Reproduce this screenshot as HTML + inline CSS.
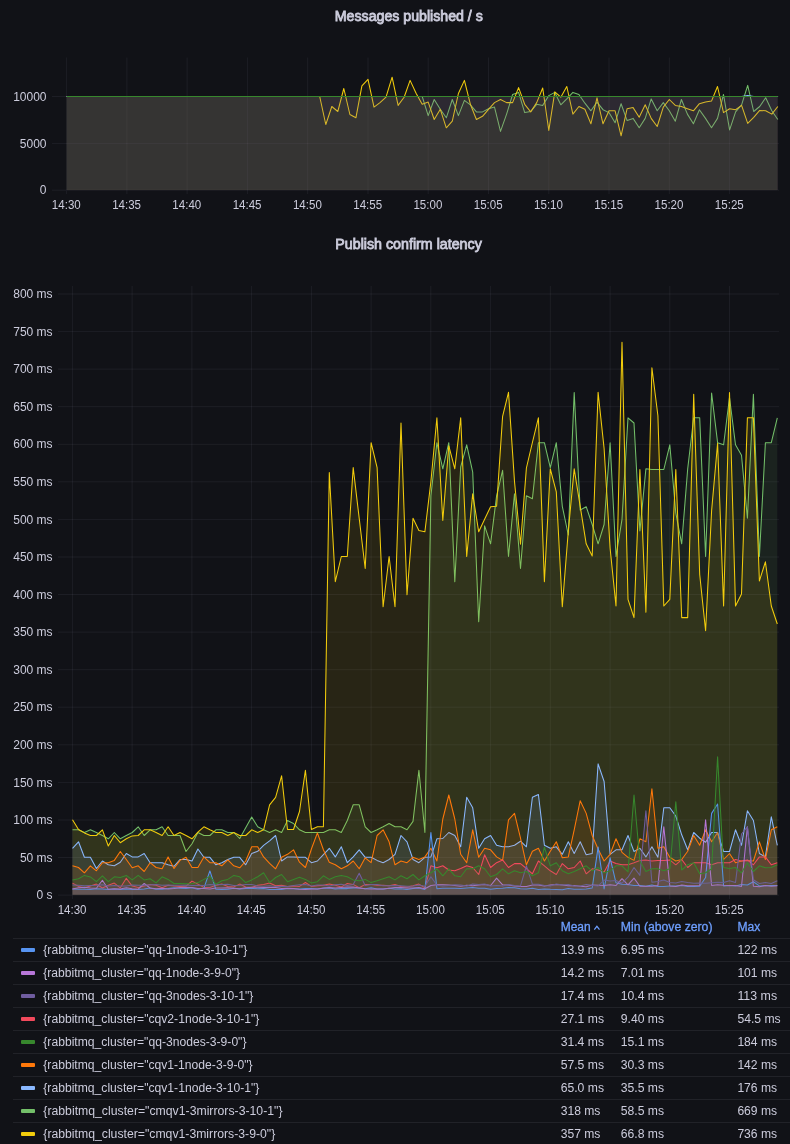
<!DOCTYPE html><html><head><meta charset="utf-8"><title>RabbitMQ latency</title><style>html,body{margin:0;padding:0;background:#111217}body{width:790px;height:1144px;overflow:hidden}svg{display:block;will-change:transform}text{font-family:"Liberation Sans",sans-serif;fill:rgb(204,204,220)}</style></head><body>
<svg width="790" height="1144" viewBox="0 0 790 1144">
<rect width="790" height="1144" fill="#111217"/>
<text x="334.8" y="21.2" font-size="14" stroke="rgb(204,204,220)" stroke-width="0.8" textLength="148" lengthAdjust="spacingAndGlyphs">Messages published / s</text>
<text x="335.3" y="248.7" font-size="14" stroke="rgb(204,204,220)" stroke-width="0.8" textLength="146.5" lengthAdjust="spacingAndGlyphs">Publish confirm latency</text>
<line x1="66.6" y1="57.5" x2="66.6" y2="194" stroke="rgba(204,204,220,0.07)" stroke-width="1"/>
<line x1="126.9" y1="57.5" x2="126.9" y2="194" stroke="rgba(204,204,220,0.07)" stroke-width="1"/>
<line x1="187.1" y1="57.5" x2="187.1" y2="194" stroke="rgba(204,204,220,0.07)" stroke-width="1"/>
<line x1="247.4" y1="57.5" x2="247.4" y2="194" stroke="rgba(204,204,220,0.07)" stroke-width="1"/>
<line x1="307.7" y1="57.5" x2="307.7" y2="194" stroke="rgba(204,204,220,0.07)" stroke-width="1"/>
<line x1="368.0" y1="57.5" x2="368.0" y2="194" stroke="rgba(204,204,220,0.07)" stroke-width="1"/>
<line x1="428.2" y1="57.5" x2="428.2" y2="194" stroke="rgba(204,204,220,0.07)" stroke-width="1"/>
<line x1="488.5" y1="57.5" x2="488.5" y2="194" stroke="rgba(204,204,220,0.07)" stroke-width="1"/>
<line x1="548.8" y1="57.5" x2="548.8" y2="194" stroke="rgba(204,204,220,0.07)" stroke-width="1"/>
<line x1="609.0" y1="57.5" x2="609.0" y2="194" stroke="rgba(204,204,220,0.07)" stroke-width="1"/>
<line x1="669.3" y1="57.5" x2="669.3" y2="194" stroke="rgba(204,204,220,0.07)" stroke-width="1"/>
<line x1="729.6" y1="57.5" x2="729.6" y2="194" stroke="rgba(204,204,220,0.07)" stroke-width="1"/>
<line x1="52" y1="190.2" x2="779" y2="190.2" stroke="rgba(204,204,220,0.07)" stroke-width="1"/>
<line x1="52" y1="143.4" x2="779" y2="143.4" stroke="rgba(204,204,220,0.07)" stroke-width="1"/>
<line x1="52" y1="96.5" x2="779" y2="96.5" stroke="rgba(204,204,220,0.07)" stroke-width="1"/>
<path d="M66.6 96.5 L72.6 96.5 L78.7 96.5 L84.7 96.5 L90.7 96.5 L96.7 96.5 L102.8 96.5 L108.8 96.5 L114.8 96.5 L120.8 96.5 L126.9 96.5 L132.9 96.5 L138.9 96.5 L145.0 96.5 L151.0 96.5 L157.0 96.5 L163.0 96.5 L169.1 96.5 L175.1 96.5 L181.1 96.5 L187.1 96.5 L193.2 96.5 L199.2 96.5 L205.2 96.5 L211.2 96.5 L217.3 96.5 L223.3 96.5 L229.3 96.5 L235.4 96.5 L241.4 96.5 L247.4 96.5 L253.4 96.5 L259.5 96.5 L265.5 96.5 L271.5 96.5 L277.5 96.5 L283.6 96.5 L289.6 96.5 L295.6 96.5 L301.7 96.5 L307.7 96.5 L313.7 96.5 L319.7 96.5 L325.8 96.5 L331.8 96.5 L337.8 96.5 L343.8 96.5 L349.9 96.5 L355.9 96.5 L361.9 96.5 L368.0 96.5 L374.0 96.5 L380.0 96.5 L386.0 96.5 L392.1 96.5 L398.1 96.5 L404.1 96.5 L410.1 96.5 L416.2 96.5 L422.2 96.5 L428.2 115.6 L434.2 99.5 L440.3 109.3 L446.3 117.8 L452.3 99.5 L458.4 115.6 L464.4 100.4 L470.4 104.8 L476.4 111.9 L482.5 111.9 L488.5 108.7 L494.5 107.1 L500.5 131.4 L506.6 114.1 L512.6 94.5 L518.6 92.4 L524.7 112.6 L530.7 111.5 L536.7 104.3 L542.7 105.4 L548.8 95.6 L554.8 92.4 L560.8 104.8 L566.8 98.9 L572.9 92.4 L578.9 94.5 L584.9 103.2 L590.9 110.8 L597.0 102.1 L603.0 109.7 L609.0 112.6 L615.1 122.8 L621.1 103.7 L627.1 120.6 L633.1 118.4 L639.2 127.8 L645.2 118.4 L651.2 98.9 L657.2 110.8 L663.3 102.6 L669.3 110.8 L675.3 121.2 L681.4 99.5 L687.4 114.1 L693.4 123.8 L699.4 109.7 L705.5 118.4 L711.5 127.8 L717.5 118.4 L723.5 94.5 L729.6 129.9 L735.6 111.9 L741.6 104.8 L747.7 85.4 L753.7 111.5 L759.7 106.5 L765.7 97.8 L771.8 110.8 L777.8 119.5 L777.8 190.2 L66.6 190.2 Z" fill="#73BF69" fill-opacity="0.038" stroke="none"/>
<path d="M66.6 96.5 L72.6 96.5 L78.7 96.5 L84.7 96.5 L90.7 96.5 L96.7 96.5 L102.8 96.5 L108.8 96.5 L114.8 96.5 L120.8 96.5 L126.9 96.5 L132.9 96.5 L138.9 96.5 L145.0 96.5 L151.0 96.5 L157.0 96.5 L163.0 96.5 L169.1 96.5 L175.1 96.5 L181.1 96.5 L187.1 96.5 L193.2 96.5 L199.2 96.5 L205.2 96.5 L211.2 96.5 L217.3 96.5 L223.3 96.5 L229.3 96.5 L235.4 96.5 L241.4 96.5 L247.4 96.5 L253.4 96.5 L259.5 96.5 L265.5 96.5 L271.5 96.5 L277.5 96.5 L283.6 96.5 L289.6 96.5 L295.6 96.5 L301.7 96.5 L307.7 96.5 L313.7 96.5 L319.7 96.5 L325.8 96.5 L331.8 96.5 L337.8 96.5 L343.8 96.5 L349.9 96.5 L355.9 96.5 L361.9 96.5 L368.0 96.5 L374.0 96.5 L380.0 96.5 L386.0 96.5 L392.1 96.5 L398.1 96.5 L404.1 96.5 L410.1 96.5 L416.2 96.5 L422.2 96.5 L428.2 115.6 L434.2 99.5 L440.3 109.3 L446.3 117.8 L452.3 99.5 L458.4 115.6 L464.4 100.4 L470.4 104.8 L476.4 111.9 L482.5 111.9 L488.5 108.7 L494.5 107.1 L500.5 131.4 L506.6 114.1 L512.6 94.5 L518.6 92.4 L524.7 112.6 L530.7 111.5 L536.7 104.3 L542.7 105.4 L548.8 95.6 L554.8 92.4 L560.8 104.8 L566.8 98.9 L572.9 92.4 L578.9 94.5 L584.9 103.2 L590.9 110.8 L597.0 102.1 L603.0 109.7 L609.0 112.6 L615.1 122.8 L621.1 103.7 L627.1 120.6 L633.1 118.4 L639.2 127.8 L645.2 118.4 L651.2 98.9 L657.2 110.8 L663.3 102.6 L669.3 110.8 L675.3 121.2 L681.4 99.5 L687.4 114.1 L693.4 123.8 L699.4 109.7 L705.5 118.4 L711.5 127.8 L717.5 118.4 L723.5 94.5 L729.6 129.9 L735.6 111.9 L741.6 104.8 L747.7 85.4 L753.7 111.5 L759.7 106.5 L765.7 97.8 L771.8 110.8 L777.8 119.5" fill="none" stroke="#73BF69" stroke-width="1.05" stroke-linejoin="round"/>
<path d="M66.6 96.5 L72.6 96.5 L78.7 96.5 L84.7 96.5 L90.7 96.5 L96.7 96.5 L102.8 96.5 L108.8 96.5 L114.8 96.5 L120.8 96.5 L126.9 96.5 L132.9 96.5 L138.9 96.5 L145.0 96.5 L151.0 96.5 L157.0 96.5 L163.0 96.5 L169.1 96.5 L175.1 96.5 L181.1 96.5 L187.1 96.5 L193.2 96.5 L199.2 96.5 L205.2 96.5 L211.2 96.5 L217.3 96.5 L223.3 96.5 L229.3 96.5 L235.4 96.5 L241.4 96.5 L247.4 96.5 L253.4 96.5 L259.5 96.5 L265.5 96.5 L271.5 96.5 L277.5 96.5 L283.6 96.5 L289.6 96.5 L295.6 96.5 L301.7 96.5 L307.7 96.5 L313.7 96.5 L319.7 96.5 L325.8 124.5 L331.8 106.5 L337.8 111.5 L343.8 88.5 L349.9 114.5 L355.9 117.8 L361.9 85.9 L368.0 79.4 L374.0 107.1 L380.0 102.6 L386.0 97.2 L392.1 77.2 L398.1 105.4 L404.1 97.2 L410.1 80.4 L416.2 93.5 L422.2 104.3 L428.2 102.1 L434.2 119.5 L440.3 109.3 L446.3 127.8 L452.3 121.2 L458.4 93.5 L464.4 80.4 L470.4 104.3 L476.4 119.5 L482.5 116.3 L488.5 109.3 L494.5 102.6 L500.5 99.5 L506.6 102.6 L512.6 102.6 L518.6 87.6 L524.7 104.3 L530.7 111.9 L536.7 102.6 L542.7 88.0 L548.8 130.4 L554.8 91.9 L560.8 97.2 L566.8 86.5 L572.9 114.1 L578.9 106.5 L584.9 109.3 L590.9 123.8 L597.0 97.8 L603.0 123.8 L609.0 110.8 L615.1 110.8 L621.1 135.8 L627.1 108.7 L633.1 107.6 L639.2 117.3 L645.2 104.8 L651.2 118.4 L657.2 126.5 L663.3 107.1 L669.3 99.5 L675.3 105.4 L681.4 106.5 L687.4 108.7 L693.4 110.8 L699.4 103.7 L705.5 102.1 L711.5 101.1 L717.5 86.5 L723.5 112.6 L729.6 108.7 L735.6 109.7 L741.6 105.4 L747.7 123.4 L753.7 117.3 L759.7 110.4 L765.7 110.8 L771.8 114.1 L777.8 106.5 L777.8 190.2 L66.6 190.2 Z" fill="#F2CC0C" fill-opacity="0.038" stroke="none"/>
<path d="M66.6 96.5 L72.6 96.5 L78.7 96.5 L84.7 96.5 L90.7 96.5 L96.7 96.5 L102.8 96.5 L108.8 96.5 L114.8 96.5 L120.8 96.5 L126.9 96.5 L132.9 96.5 L138.9 96.5 L145.0 96.5 L151.0 96.5 L157.0 96.5 L163.0 96.5 L169.1 96.5 L175.1 96.5 L181.1 96.5 L187.1 96.5 L193.2 96.5 L199.2 96.5 L205.2 96.5 L211.2 96.5 L217.3 96.5 L223.3 96.5 L229.3 96.5 L235.4 96.5 L241.4 96.5 L247.4 96.5 L253.4 96.5 L259.5 96.5 L265.5 96.5 L271.5 96.5 L277.5 96.5 L283.6 96.5 L289.6 96.5 L295.6 96.5 L301.7 96.5 L307.7 96.5 L313.7 96.5 L319.7 96.5 L325.8 124.5 L331.8 106.5 L337.8 111.5 L343.8 88.5 L349.9 114.5 L355.9 117.8 L361.9 85.9 L368.0 79.4 L374.0 107.1 L380.0 102.6 L386.0 97.2 L392.1 77.2 L398.1 105.4 L404.1 97.2 L410.1 80.4 L416.2 93.5 L422.2 104.3 L428.2 102.1 L434.2 119.5 L440.3 109.3 L446.3 127.8 L452.3 121.2 L458.4 93.5 L464.4 80.4 L470.4 104.3 L476.4 119.5 L482.5 116.3 L488.5 109.3 L494.5 102.6 L500.5 99.5 L506.6 102.6 L512.6 102.6 L518.6 87.6 L524.7 104.3 L530.7 111.9 L536.7 102.6 L542.7 88.0 L548.8 130.4 L554.8 91.9 L560.8 97.2 L566.8 86.5 L572.9 114.1 L578.9 106.5 L584.9 109.3 L590.9 123.8 L597.0 97.8 L603.0 123.8 L609.0 110.8 L615.1 110.8 L621.1 135.8 L627.1 108.7 L633.1 107.6 L639.2 117.3 L645.2 104.8 L651.2 118.4 L657.2 126.5 L663.3 107.1 L669.3 99.5 L675.3 105.4 L681.4 106.5 L687.4 108.7 L693.4 110.8 L699.4 103.7 L705.5 102.1 L711.5 101.1 L717.5 86.5 L723.5 112.6 L729.6 108.7 L735.6 109.7 L741.6 105.4 L747.7 123.4 L753.7 117.3 L759.7 110.4 L765.7 110.8 L771.8 114.1 L777.8 106.5" fill="none" stroke="#F2CC0C" stroke-width="1.05" stroke-linejoin="round"/>
<path d="M66.6 96.5 L72.6 96.5 L78.7 96.5 L84.7 96.5 L90.7 96.5 L96.7 96.5 L102.8 96.5 L108.8 96.5 L114.8 96.5 L120.8 96.5 L126.9 96.5 L132.9 96.5 L138.9 96.5 L145.0 96.5 L151.0 96.5 L157.0 96.5 L163.0 96.5 L169.1 96.5 L175.1 96.5 L181.1 96.5 L187.1 96.5 L193.2 96.5 L199.2 96.5 L205.2 96.5 L211.2 96.5 L217.3 96.5 L223.3 96.5 L229.3 96.5 L235.4 96.5 L241.4 96.5 L247.4 96.5 L253.4 96.5 L259.5 96.5 L265.5 96.5 L271.5 96.5 L277.5 96.5 L283.6 96.5 L289.6 96.5 L295.6 96.5 L301.7 96.5 L307.7 96.5 L313.7 96.5 L319.7 96.5 L325.8 96.5 L331.8 96.5 L337.8 96.5 L343.8 96.5 L349.9 96.5 L355.9 96.5 L361.9 96.5 L368.0 96.5 L374.0 96.5 L380.0 96.5 L386.0 96.5 L392.1 96.5 L398.1 96.5 L404.1 96.5 L410.1 96.5 L416.2 96.5 L422.2 96.5 L428.2 96.5 L434.2 96.5 L440.3 96.5 L446.3 96.5 L452.3 96.5 L458.4 96.5 L464.4 96.5 L470.4 96.5 L476.4 96.5 L482.5 96.5 L488.5 96.5 L494.5 96.5 L500.5 96.5 L506.6 96.5 L512.6 96.5 L518.6 96.5 L524.7 96.5 L530.7 96.5 L536.7 96.5 L542.7 96.5 L548.8 96.5 L554.8 96.5 L560.8 96.5 L566.8 96.5 L572.9 96.5 L578.9 96.5 L584.9 96.5 L590.9 96.5 L597.0 96.5 L603.0 96.5 L609.0 96.5 L615.1 96.5 L621.1 96.5 L627.1 96.5 L633.1 96.5 L639.2 96.5 L645.2 96.5 L651.2 96.5 L657.2 96.5 L663.3 96.5 L669.3 96.5 L675.3 96.5 L681.4 96.5 L687.4 96.5 L693.4 96.5 L699.4 96.5 L705.5 96.5 L711.5 96.5 L717.5 96.5 L723.5 96.5 L729.6 96.5 L735.6 96.5 L741.6 96.5 L747.7 95.5 L753.7 96.5 L759.7 96.5 L765.7 96.5 L771.8 96.5 L777.8 96.5 L777.8 190.2 L66.6 190.2 Z" fill="#8AB8FF" fill-opacity="0.038" stroke="none"/>
<path d="M66.6 96.5 L72.6 96.5 L78.7 96.5 L84.7 96.5 L90.7 96.5 L96.7 96.5 L102.8 96.5 L108.8 96.5 L114.8 96.5 L120.8 96.5 L126.9 96.5 L132.9 96.5 L138.9 96.5 L145.0 96.5 L151.0 96.5 L157.0 96.5 L163.0 96.5 L169.1 96.5 L175.1 96.5 L181.1 96.5 L187.1 96.5 L193.2 96.5 L199.2 96.5 L205.2 96.5 L211.2 96.5 L217.3 96.5 L223.3 96.5 L229.3 96.5 L235.4 96.5 L241.4 96.5 L247.4 96.5 L253.4 96.5 L259.5 96.5 L265.5 96.5 L271.5 96.5 L277.5 96.5 L283.6 96.5 L289.6 96.5 L295.6 96.5 L301.7 96.5 L307.7 96.5 L313.7 96.5 L319.7 96.5 L325.8 96.5 L331.8 96.5 L337.8 96.5 L343.8 96.5 L349.9 96.5 L355.9 96.5 L361.9 96.5 L368.0 96.5 L374.0 96.5 L380.0 96.5 L386.0 96.5 L392.1 96.5 L398.1 96.5 L404.1 96.5 L410.1 96.5 L416.2 96.5 L422.2 96.5 L428.2 96.5 L434.2 96.5 L440.3 96.5 L446.3 96.5 L452.3 96.5 L458.4 96.5 L464.4 96.5 L470.4 96.5 L476.4 96.5 L482.5 96.5 L488.5 96.5 L494.5 96.5 L500.5 96.5 L506.6 96.5 L512.6 96.5 L518.6 96.5 L524.7 96.5 L530.7 96.5 L536.7 96.5 L542.7 96.5 L548.8 96.5 L554.8 96.5 L560.8 96.5 L566.8 96.5 L572.9 96.5 L578.9 96.5 L584.9 96.5 L590.9 96.5 L597.0 96.5 L603.0 96.5 L609.0 96.5 L615.1 96.5 L621.1 96.5 L627.1 96.5 L633.1 96.5 L639.2 96.5 L645.2 96.5 L651.2 96.5 L657.2 96.5 L663.3 96.5 L669.3 96.5 L675.3 96.5 L681.4 96.5 L687.4 96.5 L693.4 96.5 L699.4 96.5 L705.5 96.5 L711.5 96.5 L717.5 96.5 L723.5 96.5 L729.6 96.5 L735.6 96.5 L741.6 96.5 L747.7 95.5 L753.7 96.5 L759.7 96.5 L765.7 96.5 L771.8 96.5 L777.8 96.5" fill="none" stroke="#8AB8FF" stroke-width="1.05" stroke-linejoin="round"/>
<path d="M66.6 96.5 L72.6 96.5 L78.7 96.5 L84.7 96.5 L90.7 96.5 L96.7 96.5 L102.8 96.5 L108.8 96.5 L114.8 96.5 L120.8 96.5 L126.9 96.5 L132.9 96.5 L138.9 96.5 L145.0 96.5 L151.0 96.5 L157.0 96.5 L163.0 96.5 L169.1 96.5 L175.1 96.5 L181.1 96.5 L187.1 96.5 L193.2 96.5 L199.2 96.5 L205.2 96.5 L211.2 96.5 L217.3 96.5 L223.3 96.5 L229.3 96.5 L235.4 96.5 L241.4 96.5 L247.4 96.5 L253.4 96.5 L259.5 96.5 L265.5 96.5 L271.5 96.5 L277.5 96.5 L283.6 96.5 L289.6 96.5 L295.6 96.5 L301.7 96.5 L307.7 96.5 L313.7 96.5 L319.7 96.5 L325.8 96.5 L331.8 96.5 L337.8 96.5 L343.8 96.5 L349.9 96.5 L355.9 96.5 L361.9 96.5 L368.0 96.5 L374.0 96.5 L380.0 96.5 L386.0 96.5 L392.1 96.5 L398.1 96.5 L404.1 96.5 L410.1 96.5 L416.2 96.5 L422.2 96.5 L428.2 96.5 L434.2 96.5 L440.3 96.5 L446.3 96.5 L452.3 96.5 L458.4 96.5 L464.4 96.5 L470.4 96.5 L476.4 96.5 L482.5 96.5 L488.5 96.5 L494.5 96.5 L500.5 96.5 L506.6 96.5 L512.6 96.5 L518.6 96.5 L524.7 96.5 L530.7 96.5 L536.7 96.5 L542.7 96.5 L548.8 96.5 L554.8 96.5 L560.8 96.5 L566.8 96.5 L572.9 96.5 L578.9 96.5 L584.9 96.5 L590.9 96.5 L597.0 96.5 L603.0 96.5 L609.0 96.5 L615.1 96.5 L621.1 96.5 L627.1 96.5 L633.1 96.5 L639.2 96.5 L645.2 96.5 L651.2 96.5 L657.2 96.5 L663.3 96.5 L669.3 96.5 L675.3 96.5 L681.4 96.5 L687.4 96.5 L693.4 96.5 L699.4 96.5 L705.5 96.5 L711.5 96.5 L717.5 96.5 L723.5 96.5 L729.6 96.5 L735.6 96.5 L741.6 96.5 L747.7 96.5 L753.7 96.5 L759.7 96.5 L765.7 96.5 L771.8 96.5 L777.8 96.5 L777.8 190.2 L66.6 190.2 Z" fill="#FF780A" fill-opacity="0.038" stroke="none"/>
<path d="M66.6 96.5 L72.6 96.5 L78.7 96.5 L84.7 96.5 L90.7 96.5 L96.7 96.5 L102.8 96.5 L108.8 96.5 L114.8 96.5 L120.8 96.5 L126.9 96.5 L132.9 96.5 L138.9 96.5 L145.0 96.5 L151.0 96.5 L157.0 96.5 L163.0 96.5 L169.1 96.5 L175.1 96.5 L181.1 96.5 L187.1 96.5 L193.2 96.5 L199.2 96.5 L205.2 96.5 L211.2 96.5 L217.3 96.5 L223.3 96.5 L229.3 96.5 L235.4 96.5 L241.4 96.5 L247.4 96.5 L253.4 96.5 L259.5 96.5 L265.5 96.5 L271.5 96.5 L277.5 96.5 L283.6 96.5 L289.6 96.5 L295.6 96.5 L301.7 96.5 L307.7 96.5 L313.7 96.5 L319.7 96.5 L325.8 96.5 L331.8 96.5 L337.8 96.5 L343.8 96.5 L349.9 96.5 L355.9 96.5 L361.9 96.5 L368.0 96.5 L374.0 96.5 L380.0 96.5 L386.0 96.5 L392.1 96.5 L398.1 96.5 L404.1 96.5 L410.1 96.5 L416.2 96.5 L422.2 96.5 L428.2 96.5 L434.2 96.5 L440.3 96.5 L446.3 96.5 L452.3 96.5 L458.4 96.5 L464.4 96.5 L470.4 96.5 L476.4 96.5 L482.5 96.5 L488.5 96.5 L494.5 96.5 L500.5 96.5 L506.6 96.5 L512.6 96.5 L518.6 96.5 L524.7 96.5 L530.7 96.5 L536.7 96.5 L542.7 96.5 L548.8 96.5 L554.8 96.5 L560.8 96.5 L566.8 96.5 L572.9 96.5 L578.9 96.5 L584.9 96.5 L590.9 96.5 L597.0 96.5 L603.0 96.5 L609.0 96.5 L615.1 96.5 L621.1 96.5 L627.1 96.5 L633.1 96.5 L639.2 96.5 L645.2 96.5 L651.2 96.5 L657.2 96.5 L663.3 96.5 L669.3 96.5 L675.3 96.5 L681.4 96.5 L687.4 96.5 L693.4 96.5 L699.4 96.5 L705.5 96.5 L711.5 96.5 L717.5 96.5 L723.5 96.5 L729.6 96.5 L735.6 96.5 L741.6 96.5 L747.7 96.5 L753.7 96.5 L759.7 96.5 L765.7 96.5 L771.8 96.5 L777.8 96.5" fill="none" stroke="#FF780A" stroke-width="1.05" stroke-linejoin="round"/>
<path d="M66.6 96.5 L72.6 96.5 L78.7 96.5 L84.7 96.5 L90.7 96.5 L96.7 96.5 L102.8 96.5 L108.8 96.5 L114.8 96.5 L120.8 96.5 L126.9 96.5 L132.9 96.5 L138.9 96.5 L145.0 96.5 L151.0 96.5 L157.0 96.5 L163.0 96.5 L169.1 96.5 L175.1 96.5 L181.1 96.5 L187.1 96.5 L193.2 96.5 L199.2 96.5 L205.2 96.5 L211.2 96.5 L217.3 96.5 L223.3 96.5 L229.3 96.5 L235.4 96.5 L241.4 96.5 L247.4 96.5 L253.4 96.5 L259.5 96.5 L265.5 96.5 L271.5 96.5 L277.5 96.5 L283.6 96.5 L289.6 96.5 L295.6 96.5 L301.7 96.5 L307.7 96.5 L313.7 96.5 L319.7 96.5 L325.8 96.5 L331.8 96.5 L337.8 96.5 L343.8 96.5 L349.9 96.5 L355.9 96.5 L361.9 96.5 L368.0 96.5 L374.0 96.5 L380.0 96.5 L386.0 96.5 L392.1 96.5 L398.1 96.5 L404.1 96.5 L410.1 96.5 L416.2 96.5 L422.2 96.5 L428.2 96.5 L434.2 96.5 L440.3 96.5 L446.3 96.5 L452.3 96.5 L458.4 96.5 L464.4 96.5 L470.4 96.5 L476.4 96.5 L482.5 96.5 L488.5 96.5 L494.5 96.5 L500.5 96.5 L506.6 96.5 L512.6 96.5 L518.6 96.5 L524.7 96.5 L530.7 96.5 L536.7 96.5 L542.7 96.5 L548.8 96.5 L554.8 96.5 L560.8 96.5 L566.8 96.5 L572.9 96.5 L578.9 96.5 L584.9 96.5 L590.9 96.5 L597.0 96.5 L603.0 96.5 L609.0 96.5 L615.1 96.5 L621.1 96.5 L627.1 96.5 L633.1 96.5 L639.2 96.5 L645.2 96.5 L651.2 96.5 L657.2 96.5 L663.3 96.5 L669.3 96.5 L675.3 96.5 L681.4 96.5 L687.4 96.5 L693.4 96.5 L699.4 96.5 L705.5 96.5 L711.5 96.5 L717.5 96.5 L723.5 96.5 L729.6 96.5 L735.6 96.5 L741.6 96.5 L747.7 96.5 L753.7 96.5 L759.7 96.5 L765.7 96.5 L771.8 96.5 L777.8 96.5 L777.8 190.2 L66.6 190.2 Z" fill="#F2495C" fill-opacity="0.038" stroke="none"/>
<path d="M66.6 96.5 L72.6 96.5 L78.7 96.5 L84.7 96.5 L90.7 96.5 L96.7 96.5 L102.8 96.5 L108.8 96.5 L114.8 96.5 L120.8 96.5 L126.9 96.5 L132.9 96.5 L138.9 96.5 L145.0 96.5 L151.0 96.5 L157.0 96.5 L163.0 96.5 L169.1 96.5 L175.1 96.5 L181.1 96.5 L187.1 96.5 L193.2 96.5 L199.2 96.5 L205.2 96.5 L211.2 96.5 L217.3 96.5 L223.3 96.5 L229.3 96.5 L235.4 96.5 L241.4 96.5 L247.4 96.5 L253.4 96.5 L259.5 96.5 L265.5 96.5 L271.5 96.5 L277.5 96.5 L283.6 96.5 L289.6 96.5 L295.6 96.5 L301.7 96.5 L307.7 96.5 L313.7 96.5 L319.7 96.5 L325.8 96.5 L331.8 96.5 L337.8 96.5 L343.8 96.5 L349.9 96.5 L355.9 96.5 L361.9 96.5 L368.0 96.5 L374.0 96.5 L380.0 96.5 L386.0 96.5 L392.1 96.5 L398.1 96.5 L404.1 96.5 L410.1 96.5 L416.2 96.5 L422.2 96.5 L428.2 96.5 L434.2 96.5 L440.3 96.5 L446.3 96.5 L452.3 96.5 L458.4 96.5 L464.4 96.5 L470.4 96.5 L476.4 96.5 L482.5 96.5 L488.5 96.5 L494.5 96.5 L500.5 96.5 L506.6 96.5 L512.6 96.5 L518.6 96.5 L524.7 96.5 L530.7 96.5 L536.7 96.5 L542.7 96.5 L548.8 96.5 L554.8 96.5 L560.8 96.5 L566.8 96.5 L572.9 96.5 L578.9 96.5 L584.9 96.5 L590.9 96.5 L597.0 96.5 L603.0 96.5 L609.0 96.5 L615.1 96.5 L621.1 96.5 L627.1 96.5 L633.1 96.5 L639.2 96.5 L645.2 96.5 L651.2 96.5 L657.2 96.5 L663.3 96.5 L669.3 96.5 L675.3 96.5 L681.4 96.5 L687.4 96.5 L693.4 96.5 L699.4 96.5 L705.5 96.5 L711.5 96.5 L717.5 96.5 L723.5 96.5 L729.6 96.5 L735.6 96.5 L741.6 96.5 L747.7 96.5 L753.7 96.5 L759.7 96.5 L765.7 96.5 L771.8 96.5 L777.8 96.5" fill="none" stroke="#F2495C" stroke-width="1.05" stroke-linejoin="round"/>
<path d="M66.6 96.5 L72.6 96.5 L78.7 96.5 L84.7 96.5 L90.7 96.5 L96.7 96.5 L102.8 96.5 L108.8 96.5 L114.8 96.5 L120.8 96.5 L126.9 96.5 L132.9 96.5 L138.9 96.5 L145.0 96.5 L151.0 96.5 L157.0 96.5 L163.0 96.5 L169.1 96.5 L175.1 96.5 L181.1 96.5 L187.1 96.5 L193.2 96.5 L199.2 96.5 L205.2 96.5 L211.2 96.5 L217.3 96.5 L223.3 96.5 L229.3 96.5 L235.4 96.5 L241.4 96.5 L247.4 96.5 L253.4 96.5 L259.5 96.5 L265.5 96.5 L271.5 96.5 L277.5 96.5 L283.6 96.5 L289.6 96.5 L295.6 96.5 L301.7 96.5 L307.7 96.5 L313.7 96.5 L319.7 96.5 L325.8 96.5 L331.8 96.5 L337.8 96.5 L343.8 96.5 L349.9 96.5 L355.9 96.5 L361.9 96.5 L368.0 96.5 L374.0 96.5 L380.0 96.5 L386.0 96.5 L392.1 96.5 L398.1 96.5 L404.1 96.5 L410.1 96.5 L416.2 96.5 L422.2 96.5 L428.2 96.5 L434.2 96.5 L440.3 96.5 L446.3 96.5 L452.3 96.5 L458.4 96.5 L464.4 96.5 L470.4 96.5 L476.4 96.5 L482.5 96.5 L488.5 96.5 L494.5 96.5 L500.5 96.5 L506.6 96.5 L512.6 96.5 L518.6 96.5 L524.7 96.5 L530.7 96.5 L536.7 96.5 L542.7 96.5 L548.8 96.5 L554.8 96.5 L560.8 96.5 L566.8 96.5 L572.9 96.5 L578.9 96.5 L584.9 96.5 L590.9 96.5 L597.0 96.5 L603.0 96.5 L609.0 96.5 L615.1 96.5 L621.1 96.5 L627.1 96.5 L633.1 96.5 L639.2 96.5 L645.2 96.5 L651.2 96.5 L657.2 96.5 L663.3 96.5 L669.3 96.5 L675.3 96.5 L681.4 96.5 L687.4 96.5 L693.4 96.5 L699.4 96.5 L705.5 96.5 L711.5 96.5 L717.5 96.5 L723.5 96.5 L729.6 96.5 L735.6 96.5 L741.6 96.5 L747.7 96.5 L753.7 96.5 L759.7 96.5 L765.7 96.5 L771.8 96.5 L777.8 96.5 L777.8 190.2 L66.6 190.2 Z" fill="#5794F2" fill-opacity="0.038" stroke="none"/>
<path d="M66.6 96.5 L72.6 96.5 L78.7 96.5 L84.7 96.5 L90.7 96.5 L96.7 96.5 L102.8 96.5 L108.8 96.5 L114.8 96.5 L120.8 96.5 L126.9 96.5 L132.9 96.5 L138.9 96.5 L145.0 96.5 L151.0 96.5 L157.0 96.5 L163.0 96.5 L169.1 96.5 L175.1 96.5 L181.1 96.5 L187.1 96.5 L193.2 96.5 L199.2 96.5 L205.2 96.5 L211.2 96.5 L217.3 96.5 L223.3 96.5 L229.3 96.5 L235.4 96.5 L241.4 96.5 L247.4 96.5 L253.4 96.5 L259.5 96.5 L265.5 96.5 L271.5 96.5 L277.5 96.5 L283.6 96.5 L289.6 96.5 L295.6 96.5 L301.7 96.5 L307.7 96.5 L313.7 96.5 L319.7 96.5 L325.8 96.5 L331.8 96.5 L337.8 96.5 L343.8 96.5 L349.9 96.5 L355.9 96.5 L361.9 96.5 L368.0 96.5 L374.0 96.5 L380.0 96.5 L386.0 96.5 L392.1 96.5 L398.1 96.5 L404.1 96.5 L410.1 96.5 L416.2 96.5 L422.2 96.5 L428.2 96.5 L434.2 96.5 L440.3 96.5 L446.3 96.5 L452.3 96.5 L458.4 96.5 L464.4 96.5 L470.4 96.5 L476.4 96.5 L482.5 96.5 L488.5 96.5 L494.5 96.5 L500.5 96.5 L506.6 96.5 L512.6 96.5 L518.6 96.5 L524.7 96.5 L530.7 96.5 L536.7 96.5 L542.7 96.5 L548.8 96.5 L554.8 96.5 L560.8 96.5 L566.8 96.5 L572.9 96.5 L578.9 96.5 L584.9 96.5 L590.9 96.5 L597.0 96.5 L603.0 96.5 L609.0 96.5 L615.1 96.5 L621.1 96.5 L627.1 96.5 L633.1 96.5 L639.2 96.5 L645.2 96.5 L651.2 96.5 L657.2 96.5 L663.3 96.5 L669.3 96.5 L675.3 96.5 L681.4 96.5 L687.4 96.5 L693.4 96.5 L699.4 96.5 L705.5 96.5 L711.5 96.5 L717.5 96.5 L723.5 96.5 L729.6 96.5 L735.6 96.5 L741.6 96.5 L747.7 96.5 L753.7 96.5 L759.7 96.5 L765.7 96.5 L771.8 96.5 L777.8 96.5" fill="none" stroke="#5794F2" stroke-width="1.05" stroke-linejoin="round"/>
<path d="M66.6 96.5 L72.6 96.5 L78.7 96.5 L84.7 96.5 L90.7 96.5 L96.7 96.5 L102.8 96.5 L108.8 96.5 L114.8 96.5 L120.8 96.5 L126.9 96.5 L132.9 96.5 L138.9 96.5 L145.0 96.5 L151.0 96.5 L157.0 96.5 L163.0 96.5 L169.1 96.5 L175.1 96.5 L181.1 96.5 L187.1 96.5 L193.2 96.5 L199.2 96.5 L205.2 96.5 L211.2 96.5 L217.3 96.5 L223.3 96.5 L229.3 96.5 L235.4 96.5 L241.4 96.5 L247.4 96.5 L253.4 96.5 L259.5 96.5 L265.5 96.5 L271.5 96.5 L277.5 96.5 L283.6 96.5 L289.6 96.5 L295.6 96.5 L301.7 96.5 L307.7 96.5 L313.7 96.5 L319.7 96.5 L325.8 96.5 L331.8 96.5 L337.8 96.5 L343.8 96.5 L349.9 96.5 L355.9 96.5 L361.9 96.5 L368.0 96.5 L374.0 96.5 L380.0 96.5 L386.0 96.5 L392.1 96.5 L398.1 96.5 L404.1 96.5 L410.1 96.5 L416.2 96.5 L422.2 96.5 L428.2 96.5 L434.2 96.5 L440.3 96.5 L446.3 96.5 L452.3 96.5 L458.4 96.5 L464.4 96.5 L470.4 96.5 L476.4 96.5 L482.5 96.5 L488.5 96.5 L494.5 96.5 L500.5 96.5 L506.6 96.5 L512.6 96.5 L518.6 96.5 L524.7 96.5 L530.7 96.5 L536.7 96.5 L542.7 96.5 L548.8 96.5 L554.8 96.5 L560.8 96.5 L566.8 96.5 L572.9 96.5 L578.9 96.5 L584.9 96.5 L590.9 96.5 L597.0 96.5 L603.0 96.5 L609.0 96.5 L615.1 96.5 L621.1 96.5 L627.1 96.5 L633.1 96.5 L639.2 96.5 L645.2 96.5 L651.2 96.5 L657.2 96.5 L663.3 96.5 L669.3 96.5 L675.3 96.5 L681.4 96.5 L687.4 96.5 L693.4 96.5 L699.4 96.5 L705.5 96.5 L711.5 96.5 L717.5 96.5 L723.5 96.5 L729.6 96.5 L735.6 96.5 L741.6 96.5 L747.7 96.5 L753.7 96.5 L759.7 96.5 L765.7 96.5 L771.8 96.5 L777.8 96.5 L777.8 190.2 L66.6 190.2 Z" fill="#B877D9" fill-opacity="0.038" stroke="none"/>
<path d="M66.6 96.5 L72.6 96.5 L78.7 96.5 L84.7 96.5 L90.7 96.5 L96.7 96.5 L102.8 96.5 L108.8 96.5 L114.8 96.5 L120.8 96.5 L126.9 96.5 L132.9 96.5 L138.9 96.5 L145.0 96.5 L151.0 96.5 L157.0 96.5 L163.0 96.5 L169.1 96.5 L175.1 96.5 L181.1 96.5 L187.1 96.5 L193.2 96.5 L199.2 96.5 L205.2 96.5 L211.2 96.5 L217.3 96.5 L223.3 96.5 L229.3 96.5 L235.4 96.5 L241.4 96.5 L247.4 96.5 L253.4 96.5 L259.5 96.5 L265.5 96.5 L271.5 96.5 L277.5 96.5 L283.6 96.5 L289.6 96.5 L295.6 96.5 L301.7 96.5 L307.7 96.5 L313.7 96.5 L319.7 96.5 L325.8 96.5 L331.8 96.5 L337.8 96.5 L343.8 96.5 L349.9 96.5 L355.9 96.5 L361.9 96.5 L368.0 96.5 L374.0 96.5 L380.0 96.5 L386.0 96.5 L392.1 96.5 L398.1 96.5 L404.1 96.5 L410.1 96.5 L416.2 96.5 L422.2 96.5 L428.2 96.5 L434.2 96.5 L440.3 96.5 L446.3 96.5 L452.3 96.5 L458.4 96.5 L464.4 96.5 L470.4 96.5 L476.4 96.5 L482.5 96.5 L488.5 96.5 L494.5 96.5 L500.5 96.5 L506.6 96.5 L512.6 96.5 L518.6 96.5 L524.7 96.5 L530.7 96.5 L536.7 96.5 L542.7 96.5 L548.8 96.5 L554.8 96.5 L560.8 96.5 L566.8 96.5 L572.9 96.5 L578.9 96.5 L584.9 96.5 L590.9 96.5 L597.0 96.5 L603.0 96.5 L609.0 96.5 L615.1 96.5 L621.1 96.5 L627.1 96.5 L633.1 96.5 L639.2 96.5 L645.2 96.5 L651.2 96.5 L657.2 96.5 L663.3 96.5 L669.3 96.5 L675.3 96.5 L681.4 96.5 L687.4 96.5 L693.4 96.5 L699.4 96.5 L705.5 96.5 L711.5 96.5 L717.5 96.5 L723.5 96.5 L729.6 96.5 L735.6 96.5 L741.6 96.5 L747.7 96.5 L753.7 96.5 L759.7 96.5 L765.7 96.5 L771.8 96.5 L777.8 96.5" fill="none" stroke="#B877D9" stroke-width="1.05" stroke-linejoin="round"/>
<path d="M66.6 96.5 L72.6 96.5 L78.7 96.5 L84.7 96.5 L90.7 96.5 L96.7 96.5 L102.8 96.5 L108.8 96.5 L114.8 96.5 L120.8 96.5 L126.9 96.5 L132.9 96.5 L138.9 96.5 L145.0 96.5 L151.0 96.5 L157.0 96.5 L163.0 96.5 L169.1 96.5 L175.1 96.5 L181.1 96.5 L187.1 96.5 L193.2 96.5 L199.2 96.5 L205.2 96.5 L211.2 96.5 L217.3 96.5 L223.3 96.5 L229.3 96.5 L235.4 96.5 L241.4 96.5 L247.4 96.5 L253.4 96.5 L259.5 96.5 L265.5 96.5 L271.5 96.5 L277.5 96.5 L283.6 96.5 L289.6 96.5 L295.6 96.5 L301.7 96.5 L307.7 96.5 L313.7 96.5 L319.7 96.5 L325.8 96.5 L331.8 96.5 L337.8 96.5 L343.8 96.5 L349.9 96.5 L355.9 96.5 L361.9 96.5 L368.0 96.5 L374.0 96.5 L380.0 96.5 L386.0 96.5 L392.1 96.5 L398.1 96.5 L404.1 96.5 L410.1 96.5 L416.2 96.5 L422.2 96.5 L428.2 96.5 L434.2 96.5 L440.3 96.5 L446.3 96.5 L452.3 96.5 L458.4 96.5 L464.4 96.5 L470.4 96.5 L476.4 96.5 L482.5 96.5 L488.5 96.5 L494.5 96.5 L500.5 96.5 L506.6 96.5 L512.6 96.5 L518.6 96.5 L524.7 96.5 L530.7 96.5 L536.7 96.5 L542.7 96.5 L548.8 96.5 L554.8 96.5 L560.8 96.5 L566.8 96.5 L572.9 96.5 L578.9 96.5 L584.9 96.5 L590.9 96.5 L597.0 96.5 L603.0 96.5 L609.0 96.5 L615.1 96.5 L621.1 96.5 L627.1 96.5 L633.1 96.5 L639.2 96.5 L645.2 96.5 L651.2 96.5 L657.2 96.5 L663.3 96.5 L669.3 96.5 L675.3 96.5 L681.4 96.5 L687.4 96.5 L693.4 96.5 L699.4 96.5 L705.5 96.5 L711.5 96.5 L717.5 96.5 L723.5 96.5 L729.6 96.5 L735.6 96.5 L741.6 96.5 L747.7 96.5 L753.7 96.5 L759.7 96.5 L765.7 96.5 L771.8 96.5 L777.8 96.5 L777.8 190.2 L66.6 190.2 Z" fill="#705DA0" fill-opacity="0.038" stroke="none"/>
<path d="M66.6 96.5 L72.6 96.5 L78.7 96.5 L84.7 96.5 L90.7 96.5 L96.7 96.5 L102.8 96.5 L108.8 96.5 L114.8 96.5 L120.8 96.5 L126.9 96.5 L132.9 96.5 L138.9 96.5 L145.0 96.5 L151.0 96.5 L157.0 96.5 L163.0 96.5 L169.1 96.5 L175.1 96.5 L181.1 96.5 L187.1 96.5 L193.2 96.5 L199.2 96.5 L205.2 96.5 L211.2 96.5 L217.3 96.5 L223.3 96.5 L229.3 96.5 L235.4 96.5 L241.4 96.5 L247.4 96.5 L253.4 96.5 L259.5 96.5 L265.5 96.5 L271.5 96.5 L277.5 96.5 L283.6 96.5 L289.6 96.5 L295.6 96.5 L301.7 96.5 L307.7 96.5 L313.7 96.5 L319.7 96.5 L325.8 96.5 L331.8 96.5 L337.8 96.5 L343.8 96.5 L349.9 96.5 L355.9 96.5 L361.9 96.5 L368.0 96.5 L374.0 96.5 L380.0 96.5 L386.0 96.5 L392.1 96.5 L398.1 96.5 L404.1 96.5 L410.1 96.5 L416.2 96.5 L422.2 96.5 L428.2 96.5 L434.2 96.5 L440.3 96.5 L446.3 96.5 L452.3 96.5 L458.4 96.5 L464.4 96.5 L470.4 96.5 L476.4 96.5 L482.5 96.5 L488.5 96.5 L494.5 96.5 L500.5 96.5 L506.6 96.5 L512.6 96.5 L518.6 96.5 L524.7 96.5 L530.7 96.5 L536.7 96.5 L542.7 96.5 L548.8 96.5 L554.8 96.5 L560.8 96.5 L566.8 96.5 L572.9 96.5 L578.9 96.5 L584.9 96.5 L590.9 96.5 L597.0 96.5 L603.0 96.5 L609.0 96.5 L615.1 96.5 L621.1 96.5 L627.1 96.5 L633.1 96.5 L639.2 96.5 L645.2 96.5 L651.2 96.5 L657.2 96.5 L663.3 96.5 L669.3 96.5 L675.3 96.5 L681.4 96.5 L687.4 96.5 L693.4 96.5 L699.4 96.5 L705.5 96.5 L711.5 96.5 L717.5 96.5 L723.5 96.5 L729.6 96.5 L735.6 96.5 L741.6 96.5 L747.7 96.5 L753.7 96.5 L759.7 96.5 L765.7 96.5 L771.8 96.5 L777.8 96.5" fill="none" stroke="#705DA0" stroke-width="1.05" stroke-linejoin="round"/>
<path d="M66.6 96.5 L72.6 96.5 L78.7 96.5 L84.7 96.5 L90.7 96.5 L96.7 96.5 L102.8 96.5 L108.8 96.5 L114.8 96.5 L120.8 96.5 L126.9 96.5 L132.9 96.5 L138.9 96.5 L145.0 96.5 L151.0 96.5 L157.0 96.5 L163.0 96.5 L169.1 96.5 L175.1 96.5 L181.1 96.5 L187.1 96.5 L193.2 96.5 L199.2 96.5 L205.2 96.5 L211.2 96.5 L217.3 96.5 L223.3 96.5 L229.3 96.5 L235.4 96.5 L241.4 96.5 L247.4 96.5 L253.4 96.5 L259.5 96.5 L265.5 96.5 L271.5 96.5 L277.5 96.5 L283.6 96.5 L289.6 96.5 L295.6 96.5 L301.7 96.5 L307.7 96.5 L313.7 96.5 L319.7 96.5 L325.8 96.5 L331.8 96.5 L337.8 96.5 L343.8 96.5 L349.9 96.5 L355.9 96.5 L361.9 96.5 L368.0 96.5 L374.0 96.5 L380.0 96.5 L386.0 96.5 L392.1 96.5 L398.1 96.5 L404.1 96.5 L410.1 96.5 L416.2 96.5 L422.2 96.5 L428.2 96.5 L434.2 96.5 L440.3 96.5 L446.3 96.5 L452.3 96.5 L458.4 96.5 L464.4 96.5 L470.4 96.5 L476.4 96.5 L482.5 96.5 L488.5 96.5 L494.5 96.5 L500.5 96.5 L506.6 96.5 L512.6 96.5 L518.6 96.5 L524.7 96.5 L530.7 96.5 L536.7 96.5 L542.7 96.5 L548.8 96.5 L554.8 96.5 L560.8 96.5 L566.8 96.5 L572.9 96.5 L578.9 96.5 L584.9 96.5 L590.9 96.5 L597.0 96.5 L603.0 96.5 L609.0 96.5 L615.1 96.5 L621.1 96.5 L627.1 96.5 L633.1 96.5 L639.2 96.5 L645.2 96.5 L651.2 96.5 L657.2 96.5 L663.3 96.5 L669.3 96.5 L675.3 96.5 L681.4 96.5 L687.4 96.5 L693.4 96.5 L699.4 96.5 L705.5 96.5 L711.5 96.5 L717.5 96.5 L723.5 96.5 L729.6 96.5 L735.6 96.5 L741.6 96.5 L747.7 96.5 L753.7 96.5 L759.7 96.5 L765.7 96.5 L771.8 96.5 L777.8 96.5 L777.8 190.2 L66.6 190.2 Z" fill="#37872D" fill-opacity="0.038" stroke="none"/>
<path d="M66.6 96.5 L72.6 96.5 L78.7 96.5 L84.7 96.5 L90.7 96.5 L96.7 96.5 L102.8 96.5 L108.8 96.5 L114.8 96.5 L120.8 96.5 L126.9 96.5 L132.9 96.5 L138.9 96.5 L145.0 96.5 L151.0 96.5 L157.0 96.5 L163.0 96.5 L169.1 96.5 L175.1 96.5 L181.1 96.5 L187.1 96.5 L193.2 96.5 L199.2 96.5 L205.2 96.5 L211.2 96.5 L217.3 96.5 L223.3 96.5 L229.3 96.5 L235.4 96.5 L241.4 96.5 L247.4 96.5 L253.4 96.5 L259.5 96.5 L265.5 96.5 L271.5 96.5 L277.5 96.5 L283.6 96.5 L289.6 96.5 L295.6 96.5 L301.7 96.5 L307.7 96.5 L313.7 96.5 L319.7 96.5 L325.8 96.5 L331.8 96.5 L337.8 96.5 L343.8 96.5 L349.9 96.5 L355.9 96.5 L361.9 96.5 L368.0 96.5 L374.0 96.5 L380.0 96.5 L386.0 96.5 L392.1 96.5 L398.1 96.5 L404.1 96.5 L410.1 96.5 L416.2 96.5 L422.2 96.5 L428.2 96.5 L434.2 96.5 L440.3 96.5 L446.3 96.5 L452.3 96.5 L458.4 96.5 L464.4 96.5 L470.4 96.5 L476.4 96.5 L482.5 96.5 L488.5 96.5 L494.5 96.5 L500.5 96.5 L506.6 96.5 L512.6 96.5 L518.6 96.5 L524.7 96.5 L530.7 96.5 L536.7 96.5 L542.7 96.5 L548.8 96.5 L554.8 96.5 L560.8 96.5 L566.8 96.5 L572.9 96.5 L578.9 96.5 L584.9 96.5 L590.9 96.5 L597.0 96.5 L603.0 96.5 L609.0 96.5 L615.1 96.5 L621.1 96.5 L627.1 96.5 L633.1 96.5 L639.2 96.5 L645.2 96.5 L651.2 96.5 L657.2 96.5 L663.3 96.5 L669.3 96.5 L675.3 96.5 L681.4 96.5 L687.4 96.5 L693.4 96.5 L699.4 96.5 L705.5 96.5 L711.5 96.5 L717.5 96.5 L723.5 96.5 L729.6 96.5 L735.6 96.5 L741.6 96.5 L747.7 96.5 L753.7 96.5 L759.7 96.5 L765.7 96.5 L771.8 96.5 L777.8 96.5" fill="none" stroke="#37872D" stroke-width="1.05" stroke-linejoin="round"/>
<text x="66.3" y="209" font-size="12" text-anchor="middle" textLength="28.9" lengthAdjust="spacingAndGlyphs">14:30</text>
<text x="126.6" y="209" font-size="12" text-anchor="middle" textLength="28.9" lengthAdjust="spacingAndGlyphs">14:35</text>
<text x="186.8" y="209" font-size="12" text-anchor="middle" textLength="28.9" lengthAdjust="spacingAndGlyphs">14:40</text>
<text x="247.1" y="209" font-size="12" text-anchor="middle" textLength="28.9" lengthAdjust="spacingAndGlyphs">14:45</text>
<text x="307.4" y="209" font-size="12" text-anchor="middle" textLength="28.9" lengthAdjust="spacingAndGlyphs">14:50</text>
<text x="367.7" y="209" font-size="12" text-anchor="middle" textLength="28.9" lengthAdjust="spacingAndGlyphs">14:55</text>
<text x="427.9" y="209" font-size="12" text-anchor="middle" textLength="28.9" lengthAdjust="spacingAndGlyphs">15:00</text>
<text x="488.2" y="209" font-size="12" text-anchor="middle" textLength="28.9" lengthAdjust="spacingAndGlyphs">15:05</text>
<text x="548.5" y="209" font-size="12" text-anchor="middle" textLength="28.9" lengthAdjust="spacingAndGlyphs">15:10</text>
<text x="608.7" y="209" font-size="12" text-anchor="middle" textLength="28.9" lengthAdjust="spacingAndGlyphs">15:15</text>
<text x="669.0" y="209" font-size="12" text-anchor="middle" textLength="28.9" lengthAdjust="spacingAndGlyphs">15:20</text>
<text x="729.3" y="209" font-size="12" text-anchor="middle" textLength="28.9" lengthAdjust="spacingAndGlyphs">15:25</text>
<text x="46.5" y="194.4" font-size="12" text-anchor="end">0</text>
<text x="46.5" y="147.6" font-size="12" text-anchor="end">5000</text>
<text x="46.5" y="100.7" font-size="12" text-anchor="end">10000</text>
<line x1="72.4" y1="286" x2="72.4" y2="899" stroke="rgba(204,204,220,0.07)" stroke-width="1"/>
<line x1="132.1" y1="286" x2="132.1" y2="899" stroke="rgba(204,204,220,0.07)" stroke-width="1"/>
<line x1="191.9" y1="286" x2="191.9" y2="899" stroke="rgba(204,204,220,0.07)" stroke-width="1"/>
<line x1="251.6" y1="286" x2="251.6" y2="899" stroke="rgba(204,204,220,0.07)" stroke-width="1"/>
<line x1="311.4" y1="286" x2="311.4" y2="899" stroke="rgba(204,204,220,0.07)" stroke-width="1"/>
<line x1="371.1" y1="286" x2="371.1" y2="899" stroke="rgba(204,204,220,0.07)" stroke-width="1"/>
<line x1="430.8" y1="286" x2="430.8" y2="899" stroke="rgba(204,204,220,0.07)" stroke-width="1"/>
<line x1="490.6" y1="286" x2="490.6" y2="899" stroke="rgba(204,204,220,0.07)" stroke-width="1"/>
<line x1="550.3" y1="286" x2="550.3" y2="899" stroke="rgba(204,204,220,0.07)" stroke-width="1"/>
<line x1="610.1" y1="286" x2="610.1" y2="899" stroke="rgba(204,204,220,0.07)" stroke-width="1"/>
<line x1="669.8" y1="286" x2="669.8" y2="899" stroke="rgba(204,204,220,0.07)" stroke-width="1"/>
<line x1="729.5" y1="286" x2="729.5" y2="899" stroke="rgba(204,204,220,0.07)" stroke-width="1"/>
<line x1="58" y1="895.1" x2="779" y2="895.1" stroke="rgba(204,204,220,0.07)" stroke-width="1"/>
<line x1="58" y1="857.5" x2="779" y2="857.5" stroke="rgba(204,204,220,0.07)" stroke-width="1"/>
<line x1="58" y1="820.0" x2="779" y2="820.0" stroke="rgba(204,204,220,0.07)" stroke-width="1"/>
<line x1="58" y1="782.4" x2="779" y2="782.4" stroke="rgba(204,204,220,0.07)" stroke-width="1"/>
<line x1="58" y1="744.8" x2="779" y2="744.8" stroke="rgba(204,204,220,0.07)" stroke-width="1"/>
<line x1="58" y1="707.2" x2="779" y2="707.2" stroke="rgba(204,204,220,0.07)" stroke-width="1"/>
<line x1="58" y1="669.7" x2="779" y2="669.7" stroke="rgba(204,204,220,0.07)" stroke-width="1"/>
<line x1="58" y1="632.1" x2="779" y2="632.1" stroke="rgba(204,204,220,0.07)" stroke-width="1"/>
<line x1="58" y1="594.5" x2="779" y2="594.5" stroke="rgba(204,204,220,0.07)" stroke-width="1"/>
<line x1="58" y1="557.0" x2="779" y2="557.0" stroke="rgba(204,204,220,0.07)" stroke-width="1"/>
<line x1="58" y1="519.4" x2="779" y2="519.4" stroke="rgba(204,204,220,0.07)" stroke-width="1"/>
<line x1="58" y1="481.8" x2="779" y2="481.8" stroke="rgba(204,204,220,0.07)" stroke-width="1"/>
<line x1="58" y1="444.3" x2="779" y2="444.3" stroke="rgba(204,204,220,0.07)" stroke-width="1"/>
<line x1="58" y1="406.7" x2="779" y2="406.7" stroke="rgba(204,204,220,0.07)" stroke-width="1"/>
<line x1="58" y1="369.1" x2="779" y2="369.1" stroke="rgba(204,204,220,0.07)" stroke-width="1"/>
<line x1="58" y1="331.6" x2="779" y2="331.6" stroke="rgba(204,204,220,0.07)" stroke-width="1"/>
<line x1="58" y1="294.0" x2="779" y2="294.0" stroke="rgba(204,204,220,0.07)" stroke-width="1"/>
<path d="M72.5 829.8 L78.5 829.8 L84.4 832.5 L90.4 829.8 L96.4 832.5 L102.4 835.5 L108.3 838.8 L114.3 832.5 L120.3 838.8 L126.3 835.5 L132.2 832.5 L138.2 826.8 L144.2 835.5 L150.1 829.8 L156.1 829.8 L162.1 826.8 L168.1 835.5 L174.0 835.5 L180.0 835.5 L186.0 851.5 L192.0 843.8 L197.9 832.5 L203.9 835.5 L209.9 835.5 L215.9 829.8 L221.8 829.8 L227.8 832.5 L233.8 832.5 L239.7 838.5 L245.7 827.7 L251.7 817.0 L257.7 826.8 L263.6 829.8 L269.6 832.5 L275.6 829.8 L281.6 832.5 L287.5 820.5 L293.5 823.5 L299.5 829.8 L305.4 832.5 L311.4 832.5 L317.4 832.5 L323.4 832.5 L329.3 829.8 L335.3 829.8 L341.3 832.5 L347.3 820.5 L353.2 804.8 L359.2 804.8 L365.2 826.8 L371.1 832.5 L377.1 829.8 L383.1 826.8 L389.1 823.5 L395.0 826.8 L401.0 826.8 L407.0 829.8 L413.0 821.4 L418.9 770.3 L424.9 832.5 L430.9 495.8 L436.9 442.7 L442.8 468.8 L448.8 442.7 L454.8 581.7 L460.7 466.8 L466.7 444.8 L472.7 472.1 L478.7 621.8 L484.6 525.8 L490.6 543.8 L496.6 495.8 L502.6 470.3 L508.5 556.5 L514.5 493.8 L520.5 568.5 L526.4 495.8 L532.4 498.8 L538.4 442.7 L544.4 442.7 L550.3 467.6 L556.3 442.7 L562.3 506.3 L568.3 535.0 L574.2 392.6 L580.2 510.0 L586.2 506.7 L592.2 524.5 L598.1 543.8 L604.1 524.5 L610.1 442.7 L616.0 556.5 L622.0 519.3 L628.0 417.8 L634.0 423.0 L639.9 531.0 L645.9 468.8 L651.9 469.5 L657.9 469.5 L663.8 469.5 L669.8 444.8 L675.8 513.0 L681.7 543.8 L687.7 468.8 L693.7 417.8 L699.7 417.8 L705.6 556.5 L711.6 393.0 L717.6 442.7 L723.6 444.8 L729.5 397.5 L735.5 444.8 L741.5 455.3 L747.4 518.3 L753.4 394.2 L759.4 556.5 L765.4 442.7 L771.3 442.7 L777.3 417.8 L777.3 894.8 L72.5 894.8 Z" fill="#73BF69" fill-opacity="0.1" stroke="none"/>
<path d="M72.5 829.8 L78.5 829.8 L84.4 832.5 L90.4 829.8 L96.4 832.5 L102.4 835.5 L108.3 838.8 L114.3 832.5 L120.3 838.8 L126.3 835.5 L132.2 832.5 L138.2 826.8 L144.2 835.5 L150.1 829.8 L156.1 829.8 L162.1 826.8 L168.1 835.5 L174.0 835.5 L180.0 835.5 L186.0 851.5 L192.0 843.8 L197.9 832.5 L203.9 835.5 L209.9 835.5 L215.9 829.8 L221.8 829.8 L227.8 832.5 L233.8 832.5 L239.7 838.5 L245.7 827.7 L251.7 817.0 L257.7 826.8 L263.6 829.8 L269.6 832.5 L275.6 829.8 L281.6 832.5 L287.5 820.5 L293.5 823.5 L299.5 829.8 L305.4 832.5 L311.4 832.5 L317.4 832.5 L323.4 832.5 L329.3 829.8 L335.3 829.8 L341.3 832.5 L347.3 820.5 L353.2 804.8 L359.2 804.8 L365.2 826.8 L371.1 832.5 L377.1 829.8 L383.1 826.8 L389.1 823.5 L395.0 826.8 L401.0 826.8 L407.0 829.8 L413.0 821.4 L418.9 770.3 L424.9 832.5 L430.9 495.8 L436.9 442.7 L442.8 468.8 L448.8 442.7 L454.8 581.7 L460.7 466.8 L466.7 444.8 L472.7 472.1 L478.7 621.8 L484.6 525.8 L490.6 543.8 L496.6 495.8 L502.6 470.3 L508.5 556.5 L514.5 493.8 L520.5 568.5 L526.4 495.8 L532.4 498.8 L538.4 442.7 L544.4 442.7 L550.3 467.6 L556.3 442.7 L562.3 506.3 L568.3 535.0 L574.2 392.6 L580.2 510.0 L586.2 506.7 L592.2 524.5 L598.1 543.8 L604.1 524.5 L610.1 442.7 L616.0 556.5 L622.0 519.3 L628.0 417.8 L634.0 423.0 L639.9 531.0 L645.9 468.8 L651.9 469.5 L657.9 469.5 L663.8 469.5 L669.8 444.8 L675.8 513.0 L681.7 543.8 L687.7 468.8 L693.7 417.8 L699.7 417.8 L705.6 556.5 L711.6 393.0 L717.6 442.7 L723.6 444.8 L729.5 397.5 L735.5 444.8 L741.5 455.3 L747.4 518.3 L753.4 394.2 L759.4 556.5 L765.4 442.7 L771.3 442.7 L777.3 417.8" fill="none" stroke="#73BF69" stroke-width="1.05" stroke-linejoin="round"/>
<path d="M72.5 819.8 L78.5 829.5 L84.4 832.9 L90.4 835.5 L96.4 835.5 L102.4 829.9 L108.3 846.0 L114.3 835.5 L120.3 842.7 L126.3 838.8 L132.2 835.9 L138.2 835.5 L144.2 829.8 L150.1 829.8 L156.1 832.5 L162.1 835.5 L168.1 826.8 L174.0 835.5 L180.0 832.5 L186.0 835.5 L192.0 838.8 L197.9 832.1 L203.9 826.8 L209.9 829.8 L215.9 832.5 L221.8 832.5 L227.8 835.5 L233.8 832.5 L239.7 835.5 L245.7 835.5 L251.7 829.8 L257.7 832.5 L263.6 829.8 L269.6 804.8 L275.6 797.3 L281.6 775.8 L287.5 829.5 L293.5 829.5 L299.5 811.5 L305.4 770.3 L311.4 829.5 L317.4 826.8 L323.4 826.8 L329.3 472.5 L335.3 581.7 L341.3 556.5 L347.3 556.5 L353.2 467.6 L359.2 518.3 L365.2 568.5 L371.1 442.7 L377.1 467.6 L383.1 606.8 L389.1 556.5 L395.0 606.8 L401.0 423.0 L407.0 594.8 L413.0 518.3 L418.9 530.5 L424.9 531.8 L430.9 481.5 L436.9 417.8 L442.8 520.5 L448.8 445.8 L454.8 468.8 L460.7 417.8 L466.7 556.5 L472.7 493.8 L478.7 531.8 L484.6 519.3 L490.6 506.7 L496.6 506.3 L502.6 416.4 L508.5 392.3 L514.5 481.5 L520.5 544.2 L526.4 468.0 L532.4 442.5 L538.4 417.8 L544.4 581.7 L550.3 468.8 L556.3 491.8 L562.3 606.8 L568.3 531.0 L574.2 468.8 L580.2 506.3 L586.2 543.8 L592.2 556.0 L598.1 392.3 L604.1 448.5 L610.1 548.3 L616.0 606.0 L622.0 342.3 L628.0 599.3 L634.0 617.6 L639.9 469.5 L645.9 612.3 L651.9 367.7 L657.9 415.7 L663.8 606.0 L669.8 599.3 L675.8 469.5 L681.7 617.6 L687.7 617.6 L693.7 394.2 L699.7 574.5 L705.6 630.8 L711.6 510.8 L717.6 443.3 L723.6 606.0 L729.5 392.6 L735.5 606.0 L741.5 594.0 L747.4 417.8 L753.4 417.8 L759.4 580.9 L765.4 561.8 L771.3 606.0 L777.3 624.0 L777.3 894.8 L72.5 894.8 Z" fill="#F2CC0C" fill-opacity="0.1" stroke="none"/>
<path d="M72.5 819.8 L78.5 829.5 L84.4 832.9 L90.4 835.5 L96.4 835.5 L102.4 829.9 L108.3 846.0 L114.3 835.5 L120.3 842.7 L126.3 838.8 L132.2 835.9 L138.2 835.5 L144.2 829.8 L150.1 829.8 L156.1 832.5 L162.1 835.5 L168.1 826.8 L174.0 835.5 L180.0 832.5 L186.0 835.5 L192.0 838.8 L197.9 832.1 L203.9 826.8 L209.9 829.8 L215.9 832.5 L221.8 832.5 L227.8 835.5 L233.8 832.5 L239.7 835.5 L245.7 835.5 L251.7 829.8 L257.7 832.5 L263.6 829.8 L269.6 804.8 L275.6 797.3 L281.6 775.8 L287.5 829.5 L293.5 829.5 L299.5 811.5 L305.4 770.3 L311.4 829.5 L317.4 826.8 L323.4 826.8 L329.3 472.5 L335.3 581.7 L341.3 556.5 L347.3 556.5 L353.2 467.6 L359.2 518.3 L365.2 568.5 L371.1 442.7 L377.1 467.6 L383.1 606.8 L389.1 556.5 L395.0 606.8 L401.0 423.0 L407.0 594.8 L413.0 518.3 L418.9 530.5 L424.9 531.8 L430.9 481.5 L436.9 417.8 L442.8 520.5 L448.8 445.8 L454.8 468.8 L460.7 417.8 L466.7 556.5 L472.7 493.8 L478.7 531.8 L484.6 519.3 L490.6 506.7 L496.6 506.3 L502.6 416.4 L508.5 392.3 L514.5 481.5 L520.5 544.2 L526.4 468.0 L532.4 442.5 L538.4 417.8 L544.4 581.7 L550.3 468.8 L556.3 491.8 L562.3 606.8 L568.3 531.0 L574.2 468.8 L580.2 506.3 L586.2 543.8 L592.2 556.0 L598.1 392.3 L604.1 448.5 L610.1 548.3 L616.0 606.0 L622.0 342.3 L628.0 599.3 L634.0 617.6 L639.9 469.5 L645.9 612.3 L651.9 367.7 L657.9 415.7 L663.8 606.0 L669.8 599.3 L675.8 469.5 L681.7 617.6 L687.7 617.6 L693.7 394.2 L699.7 574.5 L705.6 630.8 L711.6 510.8 L717.6 443.3 L723.6 606.0 L729.5 392.6 L735.5 606.0 L741.5 594.0 L747.4 417.8 L753.4 417.8 L759.4 580.9 L765.4 561.8 L771.3 606.0 L777.3 624.0" fill="none" stroke="#F2CC0C" stroke-width="1.05" stroke-linejoin="round"/>
<path d="M72.5 848.3 L78.5 841.8 L84.4 857.3 L90.4 857.3 L96.4 868.5 L102.4 861.0 L108.3 864.8 L114.3 865.8 L120.3 862.2 L126.3 853.5 L132.2 856.9 L138.2 856.9 L144.2 853.5 L150.1 862.7 L156.1 862.7 L162.1 862.7 L168.1 864.8 L174.0 866.3 L180.0 859.5 L186.0 859.5 L192.0 861.0 L197.9 849.0 L203.9 857.3 L209.9 857.3 L215.9 864.8 L221.8 862.7 L227.8 859.5 L233.8 857.3 L239.7 857.3 L245.7 864.8 L251.7 853.5 L257.7 851.3 L263.6 845.3 L269.6 840.8 L275.6 835.5 L281.6 861.0 L287.5 856.9 L293.5 856.9 L299.5 857.3 L305.4 857.3 L311.4 862.7 L317.4 861.0 L323.4 854.7 L329.3 848.3 L335.3 856.9 L341.3 846.8 L347.3 862.7 L353.2 856.9 L359.2 849.8 L365.2 857.3 L371.1 857.3 L377.1 860.4 L383.1 862.7 L389.1 859.5 L395.0 854.3 L401.0 835.5 L407.0 841.8 L413.0 859.5 L418.9 862.7 L424.9 857.3 L430.9 856.9 L436.9 838.8 L442.8 838.5 L448.8 832.5 L454.8 835.5 L460.7 846.8 L466.7 797.3 L472.7 807.8 L478.7 848.3 L484.6 838.8 L490.6 835.5 L496.6 845.3 L502.6 846.8 L508.5 846.8 L514.5 845.3 L520.5 841.2 L526.4 846.8 L532.4 797.3 L538.4 794.5 L544.4 845.3 L550.3 848.3 L556.3 846.8 L562.3 854.3 L568.3 841.8 L574.2 853.5 L580.2 841.8 L586.2 854.8 L592.2 853.5 L598.1 763.8 L604.1 781.5 L610.1 854.3 L616.0 849.8 L622.0 849.8 L628.0 835.5 L634.0 851.5 L639.9 848.3 L645.9 856.9 L651.9 846.8 L657.9 857.3 L663.8 807.8 L669.8 807.8 L675.8 816.0 L681.7 834.8 L687.7 849.8 L693.7 832.5 L699.7 838.2 L705.6 842.3 L711.6 832.5 L717.6 832.5 L723.6 851.5 L729.5 851.5 L735.5 829.8 L741.5 845.3 L747.4 810.8 L753.4 820.5 L759.4 853.5 L765.4 856.9 L771.3 816.8 L777.3 845.3 L777.3 894.8 L72.5 894.8 Z" fill="#8AB8FF" fill-opacity="0.1" stroke="none"/>
<path d="M72.5 848.3 L78.5 841.8 L84.4 857.3 L90.4 857.3 L96.4 868.5 L102.4 861.0 L108.3 864.8 L114.3 865.8 L120.3 862.2 L126.3 853.5 L132.2 856.9 L138.2 856.9 L144.2 853.5 L150.1 862.7 L156.1 862.7 L162.1 862.7 L168.1 864.8 L174.0 866.3 L180.0 859.5 L186.0 859.5 L192.0 861.0 L197.9 849.0 L203.9 857.3 L209.9 857.3 L215.9 864.8 L221.8 862.7 L227.8 859.5 L233.8 857.3 L239.7 857.3 L245.7 864.8 L251.7 853.5 L257.7 851.3 L263.6 845.3 L269.6 840.8 L275.6 835.5 L281.6 861.0 L287.5 856.9 L293.5 856.9 L299.5 857.3 L305.4 857.3 L311.4 862.7 L317.4 861.0 L323.4 854.7 L329.3 848.3 L335.3 856.9 L341.3 846.8 L347.3 862.7 L353.2 856.9 L359.2 849.8 L365.2 857.3 L371.1 857.3 L377.1 860.4 L383.1 862.7 L389.1 859.5 L395.0 854.3 L401.0 835.5 L407.0 841.8 L413.0 859.5 L418.9 862.7 L424.9 857.3 L430.9 856.9 L436.9 838.8 L442.8 838.5 L448.8 832.5 L454.8 835.5 L460.7 846.8 L466.7 797.3 L472.7 807.8 L478.7 848.3 L484.6 838.8 L490.6 835.5 L496.6 845.3 L502.6 846.8 L508.5 846.8 L514.5 845.3 L520.5 841.2 L526.4 846.8 L532.4 797.3 L538.4 794.5 L544.4 845.3 L550.3 848.3 L556.3 846.8 L562.3 854.3 L568.3 841.8 L574.2 853.5 L580.2 841.8 L586.2 854.8 L592.2 853.5 L598.1 763.8 L604.1 781.5 L610.1 854.3 L616.0 849.8 L622.0 849.8 L628.0 835.5 L634.0 851.5 L639.9 848.3 L645.9 856.9 L651.9 846.8 L657.9 857.3 L663.8 807.8 L669.8 807.8 L675.8 816.0 L681.7 834.8 L687.7 849.8 L693.7 832.5 L699.7 838.2 L705.6 842.3 L711.6 832.5 L717.6 832.5 L723.6 851.5 L729.5 851.5 L735.5 829.8 L741.5 845.3 L747.4 810.8 L753.4 820.5 L759.4 853.5 L765.4 856.9 L771.3 816.8 L777.3 845.3" fill="none" stroke="#8AB8FF" stroke-width="1.05" stroke-linejoin="round"/>
<path d="M72.5 865.8 L78.5 867.5 L84.4 872.8 L90.4 865.8 L96.4 870.8 L102.4 862.7 L108.3 862.7 L114.3 860.4 L120.3 851.5 L126.3 859.5 L132.2 867.8 L138.2 865.8 L144.2 871.5 L150.1 862.7 L156.1 867.5 L162.1 868.8 L168.1 856.9 L174.0 868.5 L180.0 860.4 L186.0 857.3 L192.0 867.5 L197.9 867.5 L203.9 856.9 L209.9 862.7 L215.9 862.7 L221.8 865.8 L227.8 859.9 L233.8 865.8 L239.7 867.8 L245.7 861.0 L251.7 846.8 L257.7 846.8 L263.6 856.9 L269.6 863.4 L275.6 868.8 L281.6 857.3 L287.5 854.3 L293.5 849.8 L299.5 862.2 L305.4 867.5 L311.4 849.0 L317.4 832.9 L323.4 849.8 L329.3 862.2 L335.3 864.8 L341.3 868.8 L347.3 865.8 L353.2 861.0 L359.2 868.8 L365.2 857.8 L371.1 862.7 L377.1 835.5 L383.1 829.8 L389.1 841.8 L395.0 864.8 L401.0 861.0 L407.0 862.7 L413.0 857.3 L418.9 859.5 L424.9 856.9 L430.9 848.3 L436.9 861.0 L442.8 819.0 L448.8 795.0 L454.8 819.0 L460.7 854.3 L466.7 862.7 L472.7 829.8 L478.7 857.3 L484.6 848.3 L490.6 849.8 L496.6 856.9 L502.6 860.4 L508.5 819.8 L514.5 813.4 L520.5 838.2 L526.4 864.8 L532.4 851.3 L538.4 848.3 L544.4 861.0 L550.3 851.3 L556.3 841.8 L562.3 857.8 L568.3 856.9 L574.2 829.8 L580.2 800.7 L586.2 813.4 L592.2 835.5 L598.1 849.0 L604.1 861.0 L610.1 854.3 L616.0 838.8 L622.0 852.4 L628.0 857.3 L634.0 860.4 L639.9 838.8 L645.9 841.8 L651.9 788.7 L657.9 848.3 L663.8 846.8 L669.8 857.3 L675.8 861.0 L681.7 859.5 L687.7 851.3 L693.7 835.5 L699.7 845.3 L705.6 829.8 L711.6 841.8 L717.6 832.5 L723.6 859.5 L729.5 853.5 L735.5 862.7 L741.5 861.0 L747.4 860.4 L753.4 861.0 L759.4 841.8 L765.4 859.5 L771.3 829.8 L777.3 826.8 L777.3 894.8 L72.5 894.8 Z" fill="#FF780A" fill-opacity="0.1" stroke="none"/>
<path d="M72.5 865.8 L78.5 867.5 L84.4 872.8 L90.4 865.8 L96.4 870.8 L102.4 862.7 L108.3 862.7 L114.3 860.4 L120.3 851.5 L126.3 859.5 L132.2 867.8 L138.2 865.8 L144.2 871.5 L150.1 862.7 L156.1 867.5 L162.1 868.8 L168.1 856.9 L174.0 868.5 L180.0 860.4 L186.0 857.3 L192.0 867.5 L197.9 867.5 L203.9 856.9 L209.9 862.7 L215.9 862.7 L221.8 865.8 L227.8 859.9 L233.8 865.8 L239.7 867.8 L245.7 861.0 L251.7 846.8 L257.7 846.8 L263.6 856.9 L269.6 863.4 L275.6 868.8 L281.6 857.3 L287.5 854.3 L293.5 849.8 L299.5 862.2 L305.4 867.5 L311.4 849.0 L317.4 832.9 L323.4 849.8 L329.3 862.2 L335.3 864.8 L341.3 868.8 L347.3 865.8 L353.2 861.0 L359.2 868.8 L365.2 857.8 L371.1 862.7 L377.1 835.5 L383.1 829.8 L389.1 841.8 L395.0 864.8 L401.0 861.0 L407.0 862.7 L413.0 857.3 L418.9 859.5 L424.9 856.9 L430.9 848.3 L436.9 861.0 L442.8 819.0 L448.8 795.0 L454.8 819.0 L460.7 854.3 L466.7 862.7 L472.7 829.8 L478.7 857.3 L484.6 848.3 L490.6 849.8 L496.6 856.9 L502.6 860.4 L508.5 819.8 L514.5 813.4 L520.5 838.2 L526.4 864.8 L532.4 851.3 L538.4 848.3 L544.4 861.0 L550.3 851.3 L556.3 841.8 L562.3 857.8 L568.3 856.9 L574.2 829.8 L580.2 800.7 L586.2 813.4 L592.2 835.5 L598.1 849.0 L604.1 861.0 L610.1 854.3 L616.0 838.8 L622.0 852.4 L628.0 857.3 L634.0 860.4 L639.9 838.8 L645.9 841.8 L651.9 788.7 L657.9 848.3 L663.8 846.8 L669.8 857.3 L675.8 861.0 L681.7 859.5 L687.7 851.3 L693.7 835.5 L699.7 845.3 L705.6 829.8 L711.6 841.8 L717.6 832.5 L723.6 859.5 L729.5 853.5 L735.5 862.7 L741.5 861.0 L747.4 860.4 L753.4 861.0 L759.4 841.8 L765.4 859.5 L771.3 829.8 L777.3 826.8" fill="none" stroke="#FF780A" stroke-width="1.05" stroke-linejoin="round"/>
<path d="M72.5 883.1 L78.5 886.4 L84.4 887.8 L90.4 886.1 L96.4 884.1 L102.4 888.0 L108.3 885.3 L114.3 883.1 L120.3 887.8 L126.3 878.3 L132.2 886.1 L138.2 887.4 L144.2 886.1 L150.1 884.4 L156.1 885.3 L162.1 887.8 L168.1 885.3 L174.0 886.1 L180.0 886.4 L186.0 886.1 L192.0 881.1 L197.9 884.1 L203.9 887.4 L209.9 887.4 L215.9 885.3 L221.8 884.1 L227.8 886.4 L233.8 886.9 L239.7 884.1 L245.7 886.9 L251.7 887.4 L257.7 885.3 L263.6 884.4 L269.6 883.1 L275.6 885.8 L281.6 885.3 L287.5 886.4 L293.5 886.1 L299.5 886.4 L305.4 882.5 L311.4 886.4 L317.4 885.8 L323.4 885.3 L329.3 884.1 L335.3 885.3 L341.3 886.9 L347.3 883.5 L353.2 884.4 L359.2 887.8 L365.2 884.4 L371.1 884.4 L377.1 885.3 L383.1 885.3 L389.1 885.8 L395.0 884.4 L401.0 886.4 L407.0 886.9 L413.0 885.8 L418.9 884.1 L424.9 887.8 L430.9 865.8 L436.9 867.8 L442.8 865.8 L448.8 870.0 L454.8 870.8 L460.7 868.5 L466.7 865.8 L472.7 867.5 L478.7 874.5 L484.6 854.8 L490.6 867.5 L496.6 862.7 L502.6 859.9 L508.5 867.5 L514.5 863.6 L520.5 863.6 L526.4 868.5 L532.4 873.8 L538.4 861.0 L544.4 865.8 L550.3 870.8 L556.3 874.5 L562.3 863.6 L568.3 868.8 L574.2 867.5 L580.2 861.0 L586.2 873.8 L592.2 868.8 L598.1 870.0 L604.1 871.9 L610.1 861.0 L616.0 863.6 L622.0 864.8 L628.0 864.8 L634.0 862.7 L639.9 860.4 L645.9 859.9 L651.9 861.0 L657.9 860.4 L663.8 860.4 L669.8 859.9 L675.8 864.8 L681.7 859.5 L687.7 867.5 L693.7 862.7 L699.7 862.7 L705.6 862.7 L711.6 864.8 L717.6 862.7 L723.6 862.7 L729.5 862.7 L735.5 859.5 L741.5 861.0 L747.4 859.9 L753.4 864.8 L759.4 856.9 L765.4 856.9 L771.3 864.8 L777.3 862.7 L777.3 894.8 L72.5 894.8 Z" fill="#F2495C" fill-opacity="0.1" stroke="none"/>
<path d="M72.5 883.1 L78.5 886.4 L84.4 887.8 L90.4 886.1 L96.4 884.1 L102.4 888.0 L108.3 885.3 L114.3 883.1 L120.3 887.8 L126.3 878.3 L132.2 886.1 L138.2 887.4 L144.2 886.1 L150.1 884.4 L156.1 885.3 L162.1 887.8 L168.1 885.3 L174.0 886.1 L180.0 886.4 L186.0 886.1 L192.0 881.1 L197.9 884.1 L203.9 887.4 L209.9 887.4 L215.9 885.3 L221.8 884.1 L227.8 886.4 L233.8 886.9 L239.7 884.1 L245.7 886.9 L251.7 887.4 L257.7 885.3 L263.6 884.4 L269.6 883.1 L275.6 885.8 L281.6 885.3 L287.5 886.4 L293.5 886.1 L299.5 886.4 L305.4 882.5 L311.4 886.4 L317.4 885.8 L323.4 885.3 L329.3 884.1 L335.3 885.3 L341.3 886.9 L347.3 883.5 L353.2 884.4 L359.2 887.8 L365.2 884.4 L371.1 884.4 L377.1 885.3 L383.1 885.3 L389.1 885.8 L395.0 884.4 L401.0 886.4 L407.0 886.9 L413.0 885.8 L418.9 884.1 L424.9 887.8 L430.9 865.8 L436.9 867.8 L442.8 865.8 L448.8 870.0 L454.8 870.8 L460.7 868.5 L466.7 865.8 L472.7 867.5 L478.7 874.5 L484.6 854.8 L490.6 867.5 L496.6 862.7 L502.6 859.9 L508.5 867.5 L514.5 863.6 L520.5 863.6 L526.4 868.5 L532.4 873.8 L538.4 861.0 L544.4 865.8 L550.3 870.8 L556.3 874.5 L562.3 863.6 L568.3 868.8 L574.2 867.5 L580.2 861.0 L586.2 873.8 L592.2 868.8 L598.1 870.0 L604.1 871.9 L610.1 861.0 L616.0 863.6 L622.0 864.8 L628.0 864.8 L634.0 862.7 L639.9 860.4 L645.9 859.9 L651.9 861.0 L657.9 860.4 L663.8 860.4 L669.8 859.9 L675.8 864.8 L681.7 859.5 L687.7 867.5 L693.7 862.7 L699.7 862.7 L705.6 862.7 L711.6 864.8 L717.6 862.7 L723.6 862.7 L729.5 862.7 L735.5 859.5 L741.5 861.0 L747.4 859.9 L753.4 864.8 L759.4 856.9 L765.4 856.9 L771.3 864.8 L777.3 862.7" fill="none" stroke="#F2495C" stroke-width="1.05" stroke-linejoin="round"/>
<path d="M72.5 888.9 L78.5 889.3 L84.4 889.2 L90.4 889.4 L96.4 888.8 L102.4 888.9 L108.3 889.5 L114.3 888.9 L120.3 889.5 L126.3 889.0 L132.2 889.5 L138.2 889.6 L144.2 889.0 L150.1 888.1 L156.1 889.2 L162.1 889.2 L168.1 888.6 L174.0 887.8 L180.0 888.2 L186.0 888.6 L192.0 887.8 L197.9 889.2 L203.9 888.1 L209.9 870.9 L215.9 889.3 L221.8 889.5 L227.8 889.2 L233.8 888.2 L239.7 889.1 L245.7 888.6 L251.7 888.3 L257.7 888.8 L263.6 888.6 L269.6 889.4 L275.6 889.6 L281.6 889.5 L287.5 888.5 L293.5 888.7 L299.5 888.9 L305.4 888.6 L311.4 888.6 L317.4 889.0 L323.4 888.2 L329.3 888.1 L335.3 888.9 L341.3 888.6 L347.3 888.6 L353.2 887.9 L359.2 888.0 L365.2 888.8 L371.1 887.8 L377.1 889.1 L383.1 888.9 L389.1 888.2 L395.0 889.1 L401.0 888.8 L407.0 889.5 L413.0 888.6 L418.9 888.1 L424.9 889.5 L430.9 832.5 L436.9 888.7 L442.8 888.3 L448.8 888.3 L454.8 888.3 L460.7 888.6 L466.7 888.0 L472.7 887.6 L478.7 888.3 L484.6 888.2 L490.6 889.3 L496.6 888.4 L502.6 888.3 L508.5 887.6 L514.5 887.8 L520.5 888.7 L526.4 888.9 L532.4 888.3 L538.4 889.4 L544.4 888.9 L550.3 889.3 L556.3 889.5 L562.3 889.7 L568.3 888.4 L574.2 889.2 L580.2 889.2 L586.2 889.0 L592.2 888.0 L598.1 847.1 L604.1 888.9 L610.1 857.8 L616.0 882.8 L622.0 884.3 L628.0 884.4 L634.0 885.5 L639.9 885.5 L645.9 886.2 L651.9 884.9 L657.9 886.4 L663.8 886.4 L669.8 886.0 L675.8 886.1 L681.7 885.6 L687.7 886.4 L693.7 886.5 L699.7 886.2 L705.6 877.5 L711.6 813.4 L717.6 804.0 L723.6 885.9 L729.5 885.5 L735.5 886.1 L741.5 884.5 L747.4 885.0 L753.4 881.7 L759.4 885.9 L765.4 885.7 L771.3 885.5 L777.3 885.5 L777.3 894.8 L72.5 894.8 Z" fill="#5794F2" fill-opacity="0.1" stroke="none"/>
<path d="M72.5 888.9 L78.5 889.3 L84.4 889.2 L90.4 889.4 L96.4 888.8 L102.4 888.9 L108.3 889.5 L114.3 888.9 L120.3 889.5 L126.3 889.0 L132.2 889.5 L138.2 889.6 L144.2 889.0 L150.1 888.1 L156.1 889.2 L162.1 889.2 L168.1 888.6 L174.0 887.8 L180.0 888.2 L186.0 888.6 L192.0 887.8 L197.9 889.2 L203.9 888.1 L209.9 870.9 L215.9 889.3 L221.8 889.5 L227.8 889.2 L233.8 888.2 L239.7 889.1 L245.7 888.6 L251.7 888.3 L257.7 888.8 L263.6 888.6 L269.6 889.4 L275.6 889.6 L281.6 889.5 L287.5 888.5 L293.5 888.7 L299.5 888.9 L305.4 888.6 L311.4 888.6 L317.4 889.0 L323.4 888.2 L329.3 888.1 L335.3 888.9 L341.3 888.6 L347.3 888.6 L353.2 887.9 L359.2 888.0 L365.2 888.8 L371.1 887.8 L377.1 889.1 L383.1 888.9 L389.1 888.2 L395.0 889.1 L401.0 888.8 L407.0 889.5 L413.0 888.6 L418.9 888.1 L424.9 889.5 L430.9 832.5 L436.9 888.7 L442.8 888.3 L448.8 888.3 L454.8 888.3 L460.7 888.6 L466.7 888.0 L472.7 887.6 L478.7 888.3 L484.6 888.2 L490.6 889.3 L496.6 888.4 L502.6 888.3 L508.5 887.6 L514.5 887.8 L520.5 888.7 L526.4 888.9 L532.4 888.3 L538.4 889.4 L544.4 888.9 L550.3 889.3 L556.3 889.5 L562.3 889.7 L568.3 888.4 L574.2 889.2 L580.2 889.2 L586.2 889.0 L592.2 888.0 L598.1 847.1 L604.1 888.9 L610.1 857.8 L616.0 882.8 L622.0 884.3 L628.0 884.4 L634.0 885.5 L639.9 885.5 L645.9 886.2 L651.9 884.9 L657.9 886.4 L663.8 886.4 L669.8 886.0 L675.8 886.1 L681.7 885.6 L687.7 886.4 L693.7 886.5 L699.7 886.2 L705.6 877.5 L711.6 813.4 L717.6 804.0 L723.6 885.9 L729.5 885.5 L735.5 886.1 L741.5 884.5 L747.4 885.0 L753.4 881.7 L759.4 885.9 L765.4 885.7 L771.3 885.5 L777.3 885.5" fill="none" stroke="#5794F2" stroke-width="1.05" stroke-linejoin="round"/>
<path d="M72.5 888.9 L78.5 887.8 L84.4 887.2 L90.4 888.0 L96.4 888.2 L102.4 880.3 L108.3 889.2 L114.3 888.8 L120.3 888.9 L126.3 887.8 L132.2 888.7 L138.2 889.2 L144.2 883.5 L150.1 888.0 L156.1 888.8 L162.1 888.3 L168.1 889.1 L174.0 888.4 L180.0 887.4 L186.0 887.3 L192.0 887.6 L197.9 888.5 L203.9 888.6 L209.9 888.9 L215.9 888.0 L221.8 888.1 L227.8 887.7 L233.8 888.3 L239.7 888.8 L245.7 887.8 L251.7 887.2 L257.7 887.3 L263.6 887.4 L269.6 887.4 L275.6 887.5 L281.6 888.5 L287.5 888.3 L293.5 888.5 L299.5 889.2 L305.4 889.4 L311.4 889.0 L317.4 888.9 L323.4 888.0 L329.3 887.4 L335.3 888.0 L341.3 887.4 L347.3 887.1 L353.2 887.1 L359.2 888.1 L365.2 888.7 L371.1 888.9 L377.1 889.0 L383.1 889.0 L389.1 888.3 L395.0 887.5 L401.0 887.4 L407.0 888.0 L413.0 887.9 L418.9 887.6 L424.9 888.8 L430.9 885.5 L436.9 884.8 L442.8 884.8 L448.8 884.9 L454.8 885.4 L460.7 886.2 L466.7 885.3 L472.7 885.8 L478.7 885.1 L484.6 884.6 L490.6 885.5 L496.6 878.1 L502.6 884.8 L508.5 885.0 L514.5 886.0 L520.5 886.4 L526.4 886.5 L532.4 885.1 L538.4 884.9 L544.4 886.0 L550.3 885.1 L556.3 884.6 L562.3 885.0 L568.3 885.7 L574.2 885.6 L580.2 886.2 L586.2 886.7 L592.2 885.0 L598.1 885.2 L604.1 885.4 L610.1 884.8 L616.0 885.5 L622.0 878.7 L628.0 884.8 L634.0 878.1 L639.9 886.2 L645.9 886.2 L651.9 886.2 L657.9 885.6 L663.8 826.8 L669.8 885.9 L675.8 886.4 L681.7 885.1 L687.7 885.7 L693.7 885.7 L699.7 885.5 L705.6 819.8 L711.6 885.5 L717.6 884.8 L723.6 885.3 L729.5 885.5 L735.5 885.5 L741.5 886.5 L747.4 826.8 L753.4 886.3 L759.4 886.7 L765.4 885.4 L771.3 886.2 L777.3 885.8 L777.3 894.8 L72.5 894.8 Z" fill="#B877D9" fill-opacity="0.1" stroke="none"/>
<path d="M72.5 888.9 L78.5 887.8 L84.4 887.2 L90.4 888.0 L96.4 888.2 L102.4 880.3 L108.3 889.2 L114.3 888.8 L120.3 888.9 L126.3 887.8 L132.2 888.7 L138.2 889.2 L144.2 883.5 L150.1 888.0 L156.1 888.8 L162.1 888.3 L168.1 889.1 L174.0 888.4 L180.0 887.4 L186.0 887.3 L192.0 887.6 L197.9 888.5 L203.9 888.6 L209.9 888.9 L215.9 888.0 L221.8 888.1 L227.8 887.7 L233.8 888.3 L239.7 888.8 L245.7 887.8 L251.7 887.2 L257.7 887.3 L263.6 887.4 L269.6 887.4 L275.6 887.5 L281.6 888.5 L287.5 888.3 L293.5 888.5 L299.5 889.2 L305.4 889.4 L311.4 889.0 L317.4 888.9 L323.4 888.0 L329.3 887.4 L335.3 888.0 L341.3 887.4 L347.3 887.1 L353.2 887.1 L359.2 888.1 L365.2 888.7 L371.1 888.9 L377.1 889.0 L383.1 889.0 L389.1 888.3 L395.0 887.5 L401.0 887.4 L407.0 888.0 L413.0 887.9 L418.9 887.6 L424.9 888.8 L430.9 885.5 L436.9 884.8 L442.8 884.8 L448.8 884.9 L454.8 885.4 L460.7 886.2 L466.7 885.3 L472.7 885.8 L478.7 885.1 L484.6 884.6 L490.6 885.5 L496.6 878.1 L502.6 884.8 L508.5 885.0 L514.5 886.0 L520.5 886.4 L526.4 886.5 L532.4 885.1 L538.4 884.9 L544.4 886.0 L550.3 885.1 L556.3 884.6 L562.3 885.0 L568.3 885.7 L574.2 885.6 L580.2 886.2 L586.2 886.7 L592.2 885.0 L598.1 885.2 L604.1 885.4 L610.1 884.8 L616.0 885.5 L622.0 878.7 L628.0 884.8 L634.0 878.1 L639.9 886.2 L645.9 886.2 L651.9 886.2 L657.9 885.6 L663.8 826.8 L669.8 885.9 L675.8 886.4 L681.7 885.1 L687.7 885.7 L693.7 885.7 L699.7 885.5 L705.6 819.8 L711.6 885.5 L717.6 884.8 L723.6 885.3 L729.5 885.5 L735.5 885.5 L741.5 886.5 L747.4 826.8 L753.4 886.3 L759.4 886.7 L765.4 885.4 L771.3 886.2 L777.3 885.8" fill="none" stroke="#B877D9" stroke-width="1.05" stroke-linejoin="round"/>
<path d="M72.5 885.0 L78.5 885.2 L84.4 885.7 L90.4 885.5 L96.4 885.3 L102.4 884.8 L108.3 886.1 L114.3 885.5 L120.3 885.9 L126.3 886.0 L132.2 885.0 L138.2 885.3 L144.2 885.3 L150.1 884.8 L156.1 884.4 L162.1 885.2 L168.1 885.1 L174.0 885.3 L180.0 885.3 L186.0 885.0 L192.0 885.4 L197.9 885.3 L203.9 885.4 L209.9 884.5 L215.9 884.8 L221.8 884.4 L227.8 884.2 L233.8 885.6 L239.7 885.3 L245.7 884.4 L251.7 884.4 L257.7 885.9 L263.6 886.3 L269.6 885.8 L275.6 886.5 L281.6 886.2 L287.5 886.5 L293.5 885.4 L299.5 884.8 L305.4 884.4 L311.4 885.9 L317.4 885.1 L323.4 885.0 L329.3 886.0 L335.3 884.8 L341.3 884.2 L347.3 885.6 L353.2 884.5 L359.2 873.3 L365.2 885.4 L371.1 884.4 L377.1 884.4 L383.1 885.8 L389.1 885.7 L395.0 885.5 L401.0 885.8 L407.0 886.2 L413.0 886.0 L418.9 885.1 L424.9 886.3 L430.9 876.8 L436.9 885.2 L442.8 886.1 L448.8 885.4 L454.8 884.8 L460.7 885.0 L466.7 886.0 L472.7 883.9 L478.7 884.4 L484.6 884.0 L490.6 885.9 L496.6 885.6 L502.6 886.1 L508.5 884.4 L514.5 885.6 L520.5 885.9 L526.4 865.8 L532.4 884.1 L538.4 884.3 L544.4 885.6 L550.3 885.9 L556.3 884.1 L562.3 884.9 L568.3 884.6 L574.2 885.9 L580.2 886.0 L586.2 884.6 L592.2 885.2 L598.1 886.0 L604.1 880.0 L610.1 881.1 L616.0 880.5 L622.0 883.2 L628.0 877.2 L634.0 867.5 L639.9 875.4 L645.9 810.8 L651.9 882.3 L657.9 881.4 L663.8 880.1 L669.8 882.6 L675.8 883.1 L681.7 881.6 L687.7 882.6 L693.7 883.2 L699.7 882.9 L705.6 883.3 L711.6 882.8 L717.6 882.3 L723.6 882.4 L729.5 880.7 L735.5 882.5 L741.5 834.0 L747.4 826.8 L753.4 879.8 L759.4 883.5 L765.4 882.6 L771.3 883.5 L777.3 880.8 L777.3 894.8 L72.5 894.8 Z" fill="#705DA0" fill-opacity="0.1" stroke="none"/>
<path d="M72.5 885.0 L78.5 885.2 L84.4 885.7 L90.4 885.5 L96.4 885.3 L102.4 884.8 L108.3 886.1 L114.3 885.5 L120.3 885.9 L126.3 886.0 L132.2 885.0 L138.2 885.3 L144.2 885.3 L150.1 884.8 L156.1 884.4 L162.1 885.2 L168.1 885.1 L174.0 885.3 L180.0 885.3 L186.0 885.0 L192.0 885.4 L197.9 885.3 L203.9 885.4 L209.9 884.5 L215.9 884.8 L221.8 884.4 L227.8 884.2 L233.8 885.6 L239.7 885.3 L245.7 884.4 L251.7 884.4 L257.7 885.9 L263.6 886.3 L269.6 885.8 L275.6 886.5 L281.6 886.2 L287.5 886.5 L293.5 885.4 L299.5 884.8 L305.4 884.4 L311.4 885.9 L317.4 885.1 L323.4 885.0 L329.3 886.0 L335.3 884.8 L341.3 884.2 L347.3 885.6 L353.2 884.5 L359.2 873.3 L365.2 885.4 L371.1 884.4 L377.1 884.4 L383.1 885.8 L389.1 885.7 L395.0 885.5 L401.0 885.8 L407.0 886.2 L413.0 886.0 L418.9 885.1 L424.9 886.3 L430.9 876.8 L436.9 885.2 L442.8 886.1 L448.8 885.4 L454.8 884.8 L460.7 885.0 L466.7 886.0 L472.7 883.9 L478.7 884.4 L484.6 884.0 L490.6 885.9 L496.6 885.6 L502.6 886.1 L508.5 884.4 L514.5 885.6 L520.5 885.9 L526.4 865.8 L532.4 884.1 L538.4 884.3 L544.4 885.6 L550.3 885.9 L556.3 884.1 L562.3 884.9 L568.3 884.6 L574.2 885.9 L580.2 886.0 L586.2 884.6 L592.2 885.2 L598.1 886.0 L604.1 880.0 L610.1 881.1 L616.0 880.5 L622.0 883.2 L628.0 877.2 L634.0 867.5 L639.9 875.4 L645.9 810.8 L651.9 882.3 L657.9 881.4 L663.8 880.1 L669.8 882.6 L675.8 883.1 L681.7 881.6 L687.7 882.6 L693.7 883.2 L699.7 882.9 L705.6 883.3 L711.6 882.8 L717.6 882.3 L723.6 882.4 L729.5 880.7 L735.5 882.5 L741.5 834.0 L747.4 826.8 L753.4 879.8 L759.4 883.5 L765.4 882.6 L771.3 883.5 L777.3 880.8" fill="none" stroke="#705DA0" stroke-width="1.05" stroke-linejoin="round"/>
<path d="M72.5 879.9 L78.5 878.7 L84.4 875.4 L90.4 876.9 L96.4 881.7 L102.4 875.8 L108.3 881.7 L114.3 876.8 L120.3 877.5 L126.3 875.4 L132.2 879.9 L138.2 875.4 L144.2 879.9 L150.1 878.7 L156.1 882.9 L162.1 876.8 L168.1 879.4 L174.0 883.5 L180.0 883.5 L186.0 883.8 L192.0 883.8 L197.9 882.6 L203.9 879.4 L209.9 876.4 L215.9 884.3 L221.8 880.8 L227.8 879.4 L233.8 875.4 L239.7 876.8 L245.7 882.6 L251.7 879.9 L257.7 876.8 L263.6 872.8 L269.6 882.6 L275.6 877.5 L281.6 874.5 L287.5 881.7 L293.5 879.4 L299.5 877.2 L305.4 879.4 L311.4 882.9 L317.4 881.7 L323.4 875.8 L329.3 879.4 L335.3 876.8 L341.3 875.4 L347.3 876.8 L353.2 879.9 L359.2 880.8 L365.2 879.4 L371.1 882.6 L377.1 880.8 L383.1 878.7 L389.1 876.8 L395.0 879.9 L401.0 875.8 L407.0 878.7 L413.0 874.5 L418.9 879.9 L424.9 875.8 L430.9 872.8 L436.9 868.8 L442.8 875.8 L448.8 868.8 L454.8 875.8 L460.7 876.8 L466.7 868.8 L472.7 868.8 L478.7 865.8 L484.6 868.8 L490.6 876.8 L496.6 874.5 L502.6 868.8 L508.5 873.8 L514.5 870.8 L520.5 872.8 L526.4 871.5 L532.4 875.8 L538.4 872.8 L544.4 847.1 L550.3 865.8 L556.3 862.7 L562.3 870.8 L568.3 873.8 L574.2 871.5 L580.2 868.8 L586.2 865.8 L592.2 870.8 L598.1 867.5 L604.1 872.8 L610.1 870.8 L616.0 865.8 L622.0 865.8 L628.0 871.9 L634.0 795.0 L639.9 861.0 L645.9 871.5 L651.9 868.8 L657.9 868.8 L663.8 870.8 L669.8 868.8 L675.8 801.8 L681.7 870.0 L687.7 864.8 L693.7 862.7 L699.7 873.8 L705.6 872.8 L711.6 868.8 L717.6 756.8 L723.6 867.5 L729.5 868.5 L735.5 867.5 L741.5 872.8 L747.4 862.7 L753.4 871.5 L759.4 865.8 L765.4 867.8 L771.3 867.5 L777.3 864.8 L777.3 894.8 L72.5 894.8 Z" fill="#37872D" fill-opacity="0.1" stroke="none"/>
<path d="M72.5 879.9 L78.5 878.7 L84.4 875.4 L90.4 876.9 L96.4 881.7 L102.4 875.8 L108.3 881.7 L114.3 876.8 L120.3 877.5 L126.3 875.4 L132.2 879.9 L138.2 875.4 L144.2 879.9 L150.1 878.7 L156.1 882.9 L162.1 876.8 L168.1 879.4 L174.0 883.5 L180.0 883.5 L186.0 883.8 L192.0 883.8 L197.9 882.6 L203.9 879.4 L209.9 876.4 L215.9 884.3 L221.8 880.8 L227.8 879.4 L233.8 875.4 L239.7 876.8 L245.7 882.6 L251.7 879.9 L257.7 876.8 L263.6 872.8 L269.6 882.6 L275.6 877.5 L281.6 874.5 L287.5 881.7 L293.5 879.4 L299.5 877.2 L305.4 879.4 L311.4 882.9 L317.4 881.7 L323.4 875.8 L329.3 879.4 L335.3 876.8 L341.3 875.4 L347.3 876.8 L353.2 879.9 L359.2 880.8 L365.2 879.4 L371.1 882.6 L377.1 880.8 L383.1 878.7 L389.1 876.8 L395.0 879.9 L401.0 875.8 L407.0 878.7 L413.0 874.5 L418.9 879.9 L424.9 875.8 L430.9 872.8 L436.9 868.8 L442.8 875.8 L448.8 868.8 L454.8 875.8 L460.7 876.8 L466.7 868.8 L472.7 868.8 L478.7 865.8 L484.6 868.8 L490.6 876.8 L496.6 874.5 L502.6 868.8 L508.5 873.8 L514.5 870.8 L520.5 872.8 L526.4 871.5 L532.4 875.8 L538.4 872.8 L544.4 847.1 L550.3 865.8 L556.3 862.7 L562.3 870.8 L568.3 873.8 L574.2 871.5 L580.2 868.8 L586.2 865.8 L592.2 870.8 L598.1 867.5 L604.1 872.8 L610.1 870.8 L616.0 865.8 L622.0 865.8 L628.0 871.9 L634.0 795.0 L639.9 861.0 L645.9 871.5 L651.9 868.8 L657.9 868.8 L663.8 870.8 L669.8 868.8 L675.8 801.8 L681.7 870.0 L687.7 864.8 L693.7 862.7 L699.7 873.8 L705.6 872.8 L711.6 868.8 L717.6 756.8 L723.6 867.5 L729.5 868.5 L735.5 867.5 L741.5 872.8 L747.4 862.7 L753.4 871.5 L759.4 865.8 L765.4 867.8 L771.3 867.5 L777.3 864.8" fill="none" stroke="#37872D" stroke-width="1.05" stroke-linejoin="round"/>
<text x="72.1" y="914" font-size="12" text-anchor="middle" textLength="28.9" lengthAdjust="spacingAndGlyphs">14:30</text>
<text x="131.8" y="914" font-size="12" text-anchor="middle" textLength="28.9" lengthAdjust="spacingAndGlyphs">14:35</text>
<text x="191.6" y="914" font-size="12" text-anchor="middle" textLength="28.9" lengthAdjust="spacingAndGlyphs">14:40</text>
<text x="251.3" y="914" font-size="12" text-anchor="middle" textLength="28.9" lengthAdjust="spacingAndGlyphs">14:45</text>
<text x="311.1" y="914" font-size="12" text-anchor="middle" textLength="28.9" lengthAdjust="spacingAndGlyphs">14:50</text>
<text x="370.8" y="914" font-size="12" text-anchor="middle" textLength="28.9" lengthAdjust="spacingAndGlyphs">14:55</text>
<text x="430.5" y="914" font-size="12" text-anchor="middle" textLength="28.9" lengthAdjust="spacingAndGlyphs">15:00</text>
<text x="490.3" y="914" font-size="12" text-anchor="middle" textLength="28.9" lengthAdjust="spacingAndGlyphs">15:05</text>
<text x="550.0" y="914" font-size="12" text-anchor="middle" textLength="28.9" lengthAdjust="spacingAndGlyphs">15:10</text>
<text x="609.8" y="914" font-size="12" text-anchor="middle" textLength="28.9" lengthAdjust="spacingAndGlyphs">15:15</text>
<text x="669.5" y="914" font-size="12" text-anchor="middle" textLength="28.9" lengthAdjust="spacingAndGlyphs">15:20</text>
<text x="729.2" y="914" font-size="12" text-anchor="middle" textLength="28.9" lengthAdjust="spacingAndGlyphs">15:25</text>
<text x="52.6" y="899.2" font-size="12" text-anchor="end">0 s</text>
<text x="52.6" y="861.6" font-size="12" text-anchor="end">50 ms</text>
<text x="52.6" y="824.1" font-size="12" text-anchor="end">100 ms</text>
<text x="52.6" y="786.5" font-size="12" text-anchor="end">150 ms</text>
<text x="52.6" y="748.9" font-size="12" text-anchor="end">200 ms</text>
<text x="52.6" y="711.4" font-size="12" text-anchor="end">250 ms</text>
<text x="52.6" y="673.8" font-size="12" text-anchor="end">300 ms</text>
<text x="52.6" y="636.2" font-size="12" text-anchor="end">350 ms</text>
<text x="52.6" y="598.6" font-size="12" text-anchor="end">400 ms</text>
<text x="52.6" y="561.1" font-size="12" text-anchor="end">450 ms</text>
<text x="52.6" y="523.5" font-size="12" text-anchor="end">500 ms</text>
<text x="52.6" y="485.9" font-size="12" text-anchor="end">550 ms</text>
<text x="52.6" y="448.4" font-size="12" text-anchor="end">600 ms</text>
<text x="52.6" y="410.8" font-size="12" text-anchor="end">650 ms</text>
<text x="52.6" y="373.2" font-size="12" text-anchor="end">700 ms</text>
<text x="52.6" y="335.7" font-size="12" text-anchor="end">750 ms</text>
<text x="52.6" y="298.1" font-size="12" text-anchor="end">800 ms</text>
<text x="560.7" y="931.2" font-size="12" textLength="30" lengthAdjust="spacingAndGlyphs" stroke="#6E9FFF" stroke-width="0.3" style="fill:#6E9FFF">Mean</text>
<path d="M594.3 929.6 L596.9 926.3 L599.5 929.6" fill="none" stroke="#6E9FFF" stroke-width="1.2"/>
<text x="620.8" y="931.2" font-size="12" textLength="91.7" lengthAdjust="spacingAndGlyphs" stroke="#6E9FFF" stroke-width="0.3" style="fill:#6E9FFF">Min (above zero)</text>
<text x="737.4" y="931.2" font-size="12" textLength="22.8" lengthAdjust="spacingAndGlyphs" stroke="#6E9FFF" stroke-width="0.3" style="fill:#6E9FFF">Max</text>
<line x1="13" y1="938.5" x2="790" y2="938.5" stroke="rgba(204,204,220,0.09)" stroke-width="1"/>
<rect x="21" y="948.1" width="14" height="4" rx="1" fill="#5794F2"/>
<text x="43.3" y="954.3" font-size="12" textLength="203.9" lengthAdjust="spacingAndGlyphs">{rabbitmq_cluster="qq-1node-3-10-1"}</text>
<text x="560.7" y="954.3" font-size="12" textLength="43.3" lengthAdjust="spacingAndGlyphs">13.9 ms</text>
<text x="620.8" y="954.3" font-size="12" textLength="43.3" lengthAdjust="spacingAndGlyphs">6.95 ms</text>
<text x="737.4" y="954.3" font-size="12" textLength="39.7" lengthAdjust="spacingAndGlyphs">122 ms</text>
<line x1="13" y1="961.5" x2="790" y2="961.5" stroke="rgba(204,204,220,0.09)" stroke-width="1"/>
<rect x="21" y="971.1" width="14" height="4" rx="1" fill="#B877D9"/>
<text x="43.3" y="977.3" font-size="12" textLength="196.7" lengthAdjust="spacingAndGlyphs">{rabbitmq_cluster="qq-1node-3-9-0"}</text>
<text x="560.7" y="977.3" font-size="12" textLength="43.3" lengthAdjust="spacingAndGlyphs">14.2 ms</text>
<text x="620.8" y="977.3" font-size="12" textLength="43.3" lengthAdjust="spacingAndGlyphs">7.01 ms</text>
<text x="737.4" y="977.3" font-size="12" textLength="39.7" lengthAdjust="spacingAndGlyphs">101 ms</text>
<line x1="13" y1="984.5" x2="790" y2="984.5" stroke="rgba(204,204,220,0.09)" stroke-width="1"/>
<rect x="21" y="994.1" width="14" height="4" rx="1" fill="#705DA0"/>
<text x="43.3" y="1000.3" font-size="12" textLength="210.0" lengthAdjust="spacingAndGlyphs">{rabbitmq_cluster="qq-3nodes-3-10-1"}</text>
<text x="560.7" y="1000.3" font-size="12" textLength="43.3" lengthAdjust="spacingAndGlyphs">17.4 ms</text>
<text x="620.8" y="1000.3" font-size="12" textLength="43.3" lengthAdjust="spacingAndGlyphs">10.4 ms</text>
<text x="737.4" y="1000.3" font-size="12" textLength="39.7" lengthAdjust="spacingAndGlyphs">113 ms</text>
<line x1="13" y1="1007.5" x2="790" y2="1007.5" stroke="rgba(204,204,220,0.09)" stroke-width="1"/>
<rect x="21" y="1017.1" width="14" height="4" rx="1" fill="#F2495C"/>
<text x="43.3" y="1023.3" font-size="12" textLength="216.1" lengthAdjust="spacingAndGlyphs">{rabbitmq_cluster="cqv2-1node-3-10-1"}</text>
<text x="560.7" y="1023.3" font-size="12" textLength="43.3" lengthAdjust="spacingAndGlyphs">27.1 ms</text>
<text x="620.8" y="1023.3" font-size="12" textLength="43.3" lengthAdjust="spacingAndGlyphs">9.40 ms</text>
<text x="737.4" y="1023.3" font-size="12" textLength="43.3" lengthAdjust="spacingAndGlyphs">54.5 ms</text>
<line x1="13" y1="1030.5" x2="790" y2="1030.5" stroke="rgba(204,204,220,0.09)" stroke-width="1"/>
<rect x="21" y="1040.1" width="14" height="4" rx="1" fill="#37872D"/>
<text x="43.3" y="1046.3" font-size="12" textLength="203.2" lengthAdjust="spacingAndGlyphs">{rabbitmq_cluster="qq-3nodes-3-9-0"}</text>
<text x="560.7" y="1046.3" font-size="12" textLength="43.3" lengthAdjust="spacingAndGlyphs">31.4 ms</text>
<text x="620.8" y="1046.3" font-size="12" textLength="43.3" lengthAdjust="spacingAndGlyphs">15.1 ms</text>
<text x="737.4" y="1046.3" font-size="12" textLength="39.7" lengthAdjust="spacingAndGlyphs">184 ms</text>
<line x1="13" y1="1053.5" x2="790" y2="1053.5" stroke="rgba(204,204,220,0.09)" stroke-width="1"/>
<rect x="21" y="1063.1" width="14" height="4" rx="1" fill="#FF780A"/>
<text x="43.3" y="1069.3" font-size="12" textLength="209.3" lengthAdjust="spacingAndGlyphs">{rabbitmq_cluster="cqv1-1node-3-9-0"}</text>
<text x="560.7" y="1069.3" font-size="12" textLength="43.3" lengthAdjust="spacingAndGlyphs">57.5 ms</text>
<text x="620.8" y="1069.3" font-size="12" textLength="43.3" lengthAdjust="spacingAndGlyphs">30.3 ms</text>
<text x="737.4" y="1069.3" font-size="12" textLength="39.7" lengthAdjust="spacingAndGlyphs">142 ms</text>
<line x1="13" y1="1076.5" x2="790" y2="1076.5" stroke="rgba(204,204,220,0.09)" stroke-width="1"/>
<rect x="21" y="1086.1" width="14" height="4" rx="1" fill="#8AB8FF"/>
<text x="43.3" y="1092.3" font-size="12" textLength="216.1" lengthAdjust="spacingAndGlyphs">{rabbitmq_cluster="cqv1-1node-3-10-1"}</text>
<text x="560.7" y="1092.3" font-size="12" textLength="43.3" lengthAdjust="spacingAndGlyphs">65.0 ms</text>
<text x="620.8" y="1092.3" font-size="12" textLength="43.3" lengthAdjust="spacingAndGlyphs">35.5 ms</text>
<text x="737.4" y="1092.3" font-size="12" textLength="39.7" lengthAdjust="spacingAndGlyphs">176 ms</text>
<line x1="13" y1="1099.5" x2="790" y2="1099.5" stroke="rgba(204,204,220,0.09)" stroke-width="1"/>
<rect x="21" y="1109.1" width="14" height="4" rx="1" fill="#73BF69"/>
<text x="43.3" y="1115.3" font-size="12" textLength="239.2" lengthAdjust="spacingAndGlyphs">{rabbitmq_cluster="cmqv1-3mirrors-3-10-1"}</text>
<text x="560.7" y="1115.3" font-size="12" textLength="39.7" lengthAdjust="spacingAndGlyphs">318 ms</text>
<text x="620.8" y="1115.3" font-size="12" textLength="43.3" lengthAdjust="spacingAndGlyphs">58.5 ms</text>
<text x="737.4" y="1115.3" font-size="12" textLength="39.7" lengthAdjust="spacingAndGlyphs">669 ms</text>
<line x1="13" y1="1122.5" x2="790" y2="1122.5" stroke="rgba(204,204,220,0.09)" stroke-width="1"/>
<rect x="21" y="1132.1" width="14" height="4" rx="1" fill="#F2CC0C"/>
<text x="43.3" y="1138.3" font-size="12" textLength="232.0" lengthAdjust="spacingAndGlyphs">{rabbitmq_cluster="cmqv1-3mirrors-3-9-0"}</text>
<text x="560.7" y="1138.3" font-size="12" textLength="39.7" lengthAdjust="spacingAndGlyphs">357 ms</text>
<text x="620.8" y="1138.3" font-size="12" textLength="43.3" lengthAdjust="spacingAndGlyphs">66.8 ms</text>
<text x="737.4" y="1138.3" font-size="12" textLength="39.7" lengthAdjust="spacingAndGlyphs">736 ms</text>
</svg></body></html>
